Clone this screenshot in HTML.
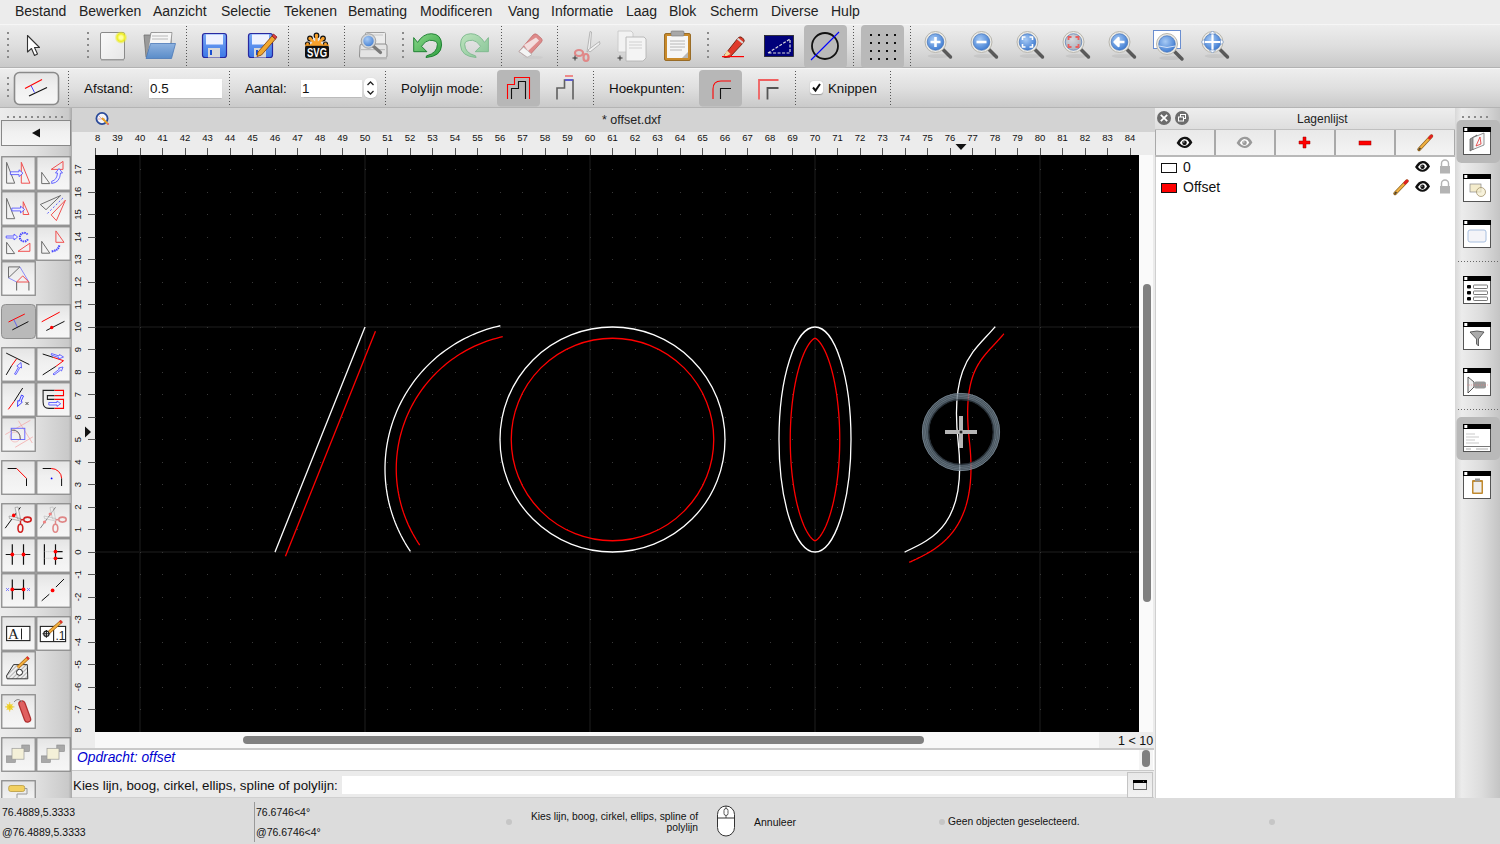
<!DOCTYPE html><html><head><meta charset="utf-8"><style>
*{margin:0;padding:0;box-sizing:border-box}
html,body{width:1500px;height:844px;overflow:hidden;background:#ececec;font-family:"Liberation Sans",sans-serif;color:#000}
.a{position:absolute}
.t{position:absolute;white-space:nowrap;line-height:1}
svg{position:absolute;overflow:visible}
</style></head><body><div class="a" style="left:0;top:0;width:1500px;height:24px;background:#ececec"></div><div class="t" style="left:15px;top:4px;font-size:14px;color:#222">Bestand</div><div class="t" style="left:79px;top:4px;font-size:14px;color:#222">Bewerken</div><div class="t" style="left:153px;top:4px;font-size:14px;color:#222">Aanzicht</div><div class="t" style="left:221px;top:4px;font-size:14px;color:#222">Selectie</div><div class="t" style="left:284px;top:4px;font-size:14px;color:#222">Tekenen</div><div class="t" style="left:348px;top:4px;font-size:14px;color:#222">Bemating</div><div class="t" style="left:420px;top:4px;font-size:14px;color:#222">Modificeren</div><div class="t" style="left:508px;top:4px;font-size:14px;color:#222">Vang</div><div class="t" style="left:551px;top:4px;font-size:14px;color:#222">Informatie</div><div class="t" style="left:626px;top:4px;font-size:14px;color:#222">Laag</div><div class="t" style="left:669px;top:4px;font-size:14px;color:#222">Blok</div><div class="t" style="left:710px;top:4px;font-size:14px;color:#222">Scherm</div><div class="t" style="left:771px;top:4px;font-size:14px;color:#222">Diverse</div><div class="t" style="left:831px;top:4px;font-size:14px;color:#222">Hulp</div><div class="a" style="left:0;top:24px;width:1500px;height:44px;background:linear-gradient(#ededed,#dedede 50%,#c9c9c9);border-top:1px solid #f6f6f6;border-bottom:1px solid #b2b2b2"></div><div class="a" style="left:0;top:68px;width:1500px;height:40px;background:linear-gradient(#eeeeee,#dfdfdf 50%,#cacaca);border-top:1px solid #f6f6f6;border-bottom:1px solid #b4b4b4"></div><div class="a" style="left:0;top:108px;width:72px;height:690px;background:linear-gradient(90deg,#ececec,#e0e0e0 50%,#c9c9c9 95%,#a8a8a8)"></div><div class="a" style="left:72px;top:108px;width:1083px;height:24px;background:#d3d3d3"></div><div class="a" style="left:72px;top:132px;width:1082px;height:616px;background:#ececec"></div><div class="t" style="left:602px;top:114px;font-size:12.5px;color:#222">* offset.dxf</div><div class="a" style="left:95px;top:155px;width:1044px;height:577px;background:#000"></div><div class="a" style="left:1139px;top:155px;width:14px;height:577px;background:#fafafa"></div><div class="a" style="left:1153px;top:132px;width:2px;height:666px;background:#ebebeb"></div><div class="a" style="left:1143px;top:284px;width:8px;height:318px;background:#808080;border-radius:4px"></div><div class="a" style="left:95px;top:732px;width:1004px;height:16px;background:#f8f8f8"></div><div class="a" style="left:243px;top:736px;width:681px;height:8px;background:#808080;border-radius:4px"></div><div class="a" style="left:1099px;top:732px;width:55px;height:16px;background:#ececec"></div><div class="t" style="left:1118px;top:735px;font-size:12.5px;color:#111">1 &lt; 10</div><div class="a" style="left:72px;top:748px;width:1082px;height:23px;background:#fff;border-top:2px solid #c9c9c9;border-bottom:1px solid #c9c9c9"></div><div class="a" style="left:1139px;top:750px;width:14px;height:20px;background:#f5f5f5"></div><div class="a" style="left:1142px;top:750px;width:8px;height:17px;background:#808080;border-radius:4px"></div><div class="t" style="left:77px;top:751px;font-size:13.8px;font-style:italic;color:#0000d0">Opdracht: offset</div><div class="a" style="left:72px;top:771px;width:1082px;height:27px;background:#ebebeb;border-bottom:1px solid #d0d0d0"></div><div class="t" style="left:73px;top:779px;font-size:13.35px;color:#111">Kies lijn, boog, cirkel, ellips, spline of polylijn:</div><div class="a" style="left:342px;top:776px;width:785px;height:18px;background:#fff"></div><div class="a" style="left:1127px;top:772px;width:26px;height:26px;background:linear-gradient(#e8e8e8,#f2f2f2);border:1px solid #c4c4c4"></div><div class="a" style="left:1155px;top:108px;width:300px;height:690px;background:#fff;border-left:1px solid #cfcfcf"></div><div class="a" style="left:1155px;top:108px;width:300px;height:22px;background:linear-gradient(#eeeeee,#dedede);border-bottom:1px solid #c0c0c0"></div><div class="t" style="left:1297px;top:113px;font-size:12px;color:#222">Lagenlijst</div><div class="a" style="left:1455px;top:108px;width:45px;height:690px;background:linear-gradient(90deg,#d8d8d8,#ececec 15%,#dcdcdc 60%,#c4c4c4)"></div><div class="a" style="left:0;top:798px;width:1500px;height:46px;background:#dcdcdc"></div><svg style="left:0;top:0" width="1500" height="844"><defs><clipPath id="rc"><rect x="95" y="132" width="1044" height="23"/></clipPath><clipPath id="lc"><rect x="72" y="155" width="23" height="577"/></clipPath></defs><g clip-path="url(#rc)"><rect x="95" y="148" width="1" height="7" fill="#555"/><text x="95.0" y="141" font-size="9.5" text-anchor="middle" fill="#111" font-family="Liberation Sans">38</text><rect x="117" y="148" width="1" height="7" fill="#555"/><text x="117.5" y="141" font-size="9.5" text-anchor="middle" fill="#111" font-family="Liberation Sans">39</text><rect x="140" y="148" width="1" height="7" fill="#555"/><text x="140.0" y="141" font-size="9.5" text-anchor="middle" fill="#111" font-family="Liberation Sans">40</text><rect x="162" y="148" width="1" height="7" fill="#555"/><text x="162.5" y="141" font-size="9.5" text-anchor="middle" fill="#111" font-family="Liberation Sans">41</text><rect x="185" y="148" width="1" height="7" fill="#555"/><text x="185.0" y="141" font-size="9.5" text-anchor="middle" fill="#111" font-family="Liberation Sans">42</text><rect x="207" y="148" width="1" height="7" fill="#555"/><text x="207.5" y="141" font-size="9.5" text-anchor="middle" fill="#111" font-family="Liberation Sans">43</text><rect x="230" y="148" width="1" height="7" fill="#555"/><text x="230.0" y="141" font-size="9.5" text-anchor="middle" fill="#111" font-family="Liberation Sans">44</text><rect x="252" y="148" width="1" height="7" fill="#555"/><text x="252.5" y="141" font-size="9.5" text-anchor="middle" fill="#111" font-family="Liberation Sans">45</text><rect x="275" y="148" width="1" height="7" fill="#555"/><text x="275.0" y="141" font-size="9.5" text-anchor="middle" fill="#111" font-family="Liberation Sans">46</text><rect x="297" y="148" width="1" height="7" fill="#555"/><text x="297.5" y="141" font-size="9.5" text-anchor="middle" fill="#111" font-family="Liberation Sans">47</text><rect x="320" y="148" width="1" height="7" fill="#555"/><text x="320.0" y="141" font-size="9.5" text-anchor="middle" fill="#111" font-family="Liberation Sans">48</text><rect x="342" y="148" width="1" height="7" fill="#555"/><text x="342.5" y="141" font-size="9.5" text-anchor="middle" fill="#111" font-family="Liberation Sans">49</text><rect x="365" y="148" width="1" height="7" fill="#555"/><text x="365.0" y="141" font-size="9.5" text-anchor="middle" fill="#111" font-family="Liberation Sans">50</text><rect x="387" y="148" width="1" height="7" fill="#555"/><text x="387.5" y="141" font-size="9.5" text-anchor="middle" fill="#111" font-family="Liberation Sans">51</text><rect x="410" y="148" width="1" height="7" fill="#555"/><text x="410.0" y="141" font-size="9.5" text-anchor="middle" fill="#111" font-family="Liberation Sans">52</text><rect x="432" y="148" width="1" height="7" fill="#555"/><text x="432.5" y="141" font-size="9.5" text-anchor="middle" fill="#111" font-family="Liberation Sans">53</text><rect x="455" y="148" width="1" height="7" fill="#555"/><text x="455.0" y="141" font-size="9.5" text-anchor="middle" fill="#111" font-family="Liberation Sans">54</text><rect x="477" y="148" width="1" height="7" fill="#555"/><text x="477.5" y="141" font-size="9.5" text-anchor="middle" fill="#111" font-family="Liberation Sans">55</text><rect x="500" y="148" width="1" height="7" fill="#555"/><text x="500.0" y="141" font-size="9.5" text-anchor="middle" fill="#111" font-family="Liberation Sans">56</text><rect x="522" y="148" width="1" height="7" fill="#555"/><text x="522.5" y="141" font-size="9.5" text-anchor="middle" fill="#111" font-family="Liberation Sans">57</text><rect x="545" y="148" width="1" height="7" fill="#555"/><text x="545.0" y="141" font-size="9.5" text-anchor="middle" fill="#111" font-family="Liberation Sans">58</text><rect x="567" y="148" width="1" height="7" fill="#555"/><text x="567.5" y="141" font-size="9.5" text-anchor="middle" fill="#111" font-family="Liberation Sans">59</text><rect x="590" y="148" width="1" height="7" fill="#555"/><text x="590.0" y="141" font-size="9.5" text-anchor="middle" fill="#111" font-family="Liberation Sans">60</text><rect x="612" y="148" width="1" height="7" fill="#555"/><text x="612.5" y="141" font-size="9.5" text-anchor="middle" fill="#111" font-family="Liberation Sans">61</text><rect x="635" y="148" width="1" height="7" fill="#555"/><text x="635.0" y="141" font-size="9.5" text-anchor="middle" fill="#111" font-family="Liberation Sans">62</text><rect x="657" y="148" width="1" height="7" fill="#555"/><text x="657.5" y="141" font-size="9.5" text-anchor="middle" fill="#111" font-family="Liberation Sans">63</text><rect x="680" y="148" width="1" height="7" fill="#555"/><text x="680.0" y="141" font-size="9.5" text-anchor="middle" fill="#111" font-family="Liberation Sans">64</text><rect x="702" y="148" width="1" height="7" fill="#555"/><text x="702.5" y="141" font-size="9.5" text-anchor="middle" fill="#111" font-family="Liberation Sans">65</text><rect x="725" y="148" width="1" height="7" fill="#555"/><text x="725.0" y="141" font-size="9.5" text-anchor="middle" fill="#111" font-family="Liberation Sans">66</text><rect x="747" y="148" width="1" height="7" fill="#555"/><text x="747.5" y="141" font-size="9.5" text-anchor="middle" fill="#111" font-family="Liberation Sans">67</text><rect x="770" y="148" width="1" height="7" fill="#555"/><text x="770.0" y="141" font-size="9.5" text-anchor="middle" fill="#111" font-family="Liberation Sans">68</text><rect x="792" y="148" width="1" height="7" fill="#555"/><text x="792.5" y="141" font-size="9.5" text-anchor="middle" fill="#111" font-family="Liberation Sans">69</text><rect x="815" y="148" width="1" height="7" fill="#555"/><text x="815.0" y="141" font-size="9.5" text-anchor="middle" fill="#111" font-family="Liberation Sans">70</text><rect x="837" y="148" width="1" height="7" fill="#555"/><text x="837.5" y="141" font-size="9.5" text-anchor="middle" fill="#111" font-family="Liberation Sans">71</text><rect x="860" y="148" width="1" height="7" fill="#555"/><text x="860.0" y="141" font-size="9.5" text-anchor="middle" fill="#111" font-family="Liberation Sans">72</text><rect x="882" y="148" width="1" height="7" fill="#555"/><text x="882.5" y="141" font-size="9.5" text-anchor="middle" fill="#111" font-family="Liberation Sans">73</text><rect x="905" y="148" width="1" height="7" fill="#555"/><text x="905.0" y="141" font-size="9.5" text-anchor="middle" fill="#111" font-family="Liberation Sans">74</text><rect x="927" y="148" width="1" height="7" fill="#555"/><text x="927.5" y="141" font-size="9.5" text-anchor="middle" fill="#111" font-family="Liberation Sans">75</text><rect x="950" y="148" width="1" height="7" fill="#555"/><text x="950.0" y="141" font-size="9.5" text-anchor="middle" fill="#111" font-family="Liberation Sans">76</text><rect x="972" y="148" width="1" height="7" fill="#555"/><text x="972.5" y="141" font-size="9.5" text-anchor="middle" fill="#111" font-family="Liberation Sans">77</text><rect x="995" y="148" width="1" height="7" fill="#555"/><text x="995.0" y="141" font-size="9.5" text-anchor="middle" fill="#111" font-family="Liberation Sans">78</text><rect x="1017" y="148" width="1" height="7" fill="#555"/><text x="1017.5" y="141" font-size="9.5" text-anchor="middle" fill="#111" font-family="Liberation Sans">79</text><rect x="1040" y="148" width="1" height="7" fill="#555"/><text x="1040.0" y="141" font-size="9.5" text-anchor="middle" fill="#111" font-family="Liberation Sans">80</text><rect x="1062" y="148" width="1" height="7" fill="#555"/><text x="1062.5" y="141" font-size="9.5" text-anchor="middle" fill="#111" font-family="Liberation Sans">81</text><rect x="1085" y="148" width="1" height="7" fill="#555"/><text x="1085.0" y="141" font-size="9.5" text-anchor="middle" fill="#111" font-family="Liberation Sans">82</text><rect x="1107" y="148" width="1" height="7" fill="#555"/><text x="1107.5" y="141" font-size="9.5" text-anchor="middle" fill="#111" font-family="Liberation Sans">83</text><rect x="1130" y="148" width="1" height="7" fill="#555"/><text x="1130.0" y="141" font-size="9.5" text-anchor="middle" fill="#111" font-family="Liberation Sans">84</text><rect x="1152" y="148" width="1" height="7" fill="#555"/><text x="1152.5" y="141" font-size="9.5" text-anchor="middle" fill="#111" font-family="Liberation Sans">85</text></g><g clip-path="url(#lc)"><rect x="88" y="754" width="7" height="1" fill="#555"/><text transform="translate(80.8 754.5) rotate(-90)" x="0" y="0" font-size="9.5" text-anchor="middle" fill="#111" font-family="Liberation Sans">-9</text><rect x="88" y="732" width="7" height="1" fill="#555"/><text transform="translate(80.8 732.0) rotate(-90)" x="0" y="0" font-size="9.5" text-anchor="middle" fill="#111" font-family="Liberation Sans">-8</text><rect x="88" y="709" width="7" height="1" fill="#555"/><text transform="translate(80.8 709.5) rotate(-90)" x="0" y="0" font-size="9.5" text-anchor="middle" fill="#111" font-family="Liberation Sans">-7</text><rect x="88" y="687" width="7" height="1" fill="#555"/><text transform="translate(80.8 687.0) rotate(-90)" x="0" y="0" font-size="9.5" text-anchor="middle" fill="#111" font-family="Liberation Sans">-6</text><rect x="88" y="664" width="7" height="1" fill="#555"/><text transform="translate(80.8 664.5) rotate(-90)" x="0" y="0" font-size="9.5" text-anchor="middle" fill="#111" font-family="Liberation Sans">-5</text><rect x="88" y="642" width="7" height="1" fill="#555"/><text transform="translate(80.8 642.0) rotate(-90)" x="0" y="0" font-size="9.5" text-anchor="middle" fill="#111" font-family="Liberation Sans">-4</text><rect x="88" y="619" width="7" height="1" fill="#555"/><text transform="translate(80.8 619.5) rotate(-90)" x="0" y="0" font-size="9.5" text-anchor="middle" fill="#111" font-family="Liberation Sans">-3</text><rect x="88" y="597" width="7" height="1" fill="#555"/><text transform="translate(80.8 597.0) rotate(-90)" x="0" y="0" font-size="9.5" text-anchor="middle" fill="#111" font-family="Liberation Sans">-2</text><rect x="88" y="574" width="7" height="1" fill="#555"/><text transform="translate(80.8 574.5) rotate(-90)" x="0" y="0" font-size="9.5" text-anchor="middle" fill="#111" font-family="Liberation Sans">-1</text><rect x="88" y="552" width="7" height="1" fill="#555"/><text transform="translate(80.8 552.0) rotate(-90)" x="0" y="0" font-size="9.5" text-anchor="middle" fill="#111" font-family="Liberation Sans">0</text><rect x="88" y="529" width="7" height="1" fill="#555"/><text transform="translate(80.8 529.5) rotate(-90)" x="0" y="0" font-size="9.5" text-anchor="middle" fill="#111" font-family="Liberation Sans">1</text><rect x="88" y="507" width="7" height="1" fill="#555"/><text transform="translate(80.8 507.0) rotate(-90)" x="0" y="0" font-size="9.5" text-anchor="middle" fill="#111" font-family="Liberation Sans">2</text><rect x="88" y="484" width="7" height="1" fill="#555"/><text transform="translate(80.8 484.5) rotate(-90)" x="0" y="0" font-size="9.5" text-anchor="middle" fill="#111" font-family="Liberation Sans">3</text><rect x="88" y="462" width="7" height="1" fill="#555"/><text transform="translate(80.8 462.0) rotate(-90)" x="0" y="0" font-size="9.5" text-anchor="middle" fill="#111" font-family="Liberation Sans">4</text><rect x="88" y="439" width="7" height="1" fill="#555"/><text transform="translate(80.8 439.5) rotate(-90)" x="0" y="0" font-size="9.5" text-anchor="middle" fill="#111" font-family="Liberation Sans">5</text><rect x="88" y="417" width="7" height="1" fill="#555"/><text transform="translate(80.8 417.0) rotate(-90)" x="0" y="0" font-size="9.5" text-anchor="middle" fill="#111" font-family="Liberation Sans">6</text><rect x="88" y="394" width="7" height="1" fill="#555"/><text transform="translate(80.8 394.5) rotate(-90)" x="0" y="0" font-size="9.5" text-anchor="middle" fill="#111" font-family="Liberation Sans">7</text><rect x="88" y="372" width="7" height="1" fill="#555"/><text transform="translate(80.8 372.0) rotate(-90)" x="0" y="0" font-size="9.5" text-anchor="middle" fill="#111" font-family="Liberation Sans">8</text><rect x="88" y="349" width="7" height="1" fill="#555"/><text transform="translate(80.8 349.5) rotate(-90)" x="0" y="0" font-size="9.5" text-anchor="middle" fill="#111" font-family="Liberation Sans">9</text><rect x="88" y="327" width="7" height="1" fill="#555"/><text transform="translate(80.8 327.0) rotate(-90)" x="0" y="0" font-size="9.5" text-anchor="middle" fill="#111" font-family="Liberation Sans">10</text><rect x="88" y="304" width="7" height="1" fill="#555"/><text transform="translate(80.8 304.5) rotate(-90)" x="0" y="0" font-size="9.5" text-anchor="middle" fill="#111" font-family="Liberation Sans">11</text><rect x="88" y="282" width="7" height="1" fill="#555"/><text transform="translate(80.8 282.0) rotate(-90)" x="0" y="0" font-size="9.5" text-anchor="middle" fill="#111" font-family="Liberation Sans">12</text><rect x="88" y="259" width="7" height="1" fill="#555"/><text transform="translate(80.8 259.5) rotate(-90)" x="0" y="0" font-size="9.5" text-anchor="middle" fill="#111" font-family="Liberation Sans">13</text><rect x="88" y="237" width="7" height="1" fill="#555"/><text transform="translate(80.8 237.0) rotate(-90)" x="0" y="0" font-size="9.5" text-anchor="middle" fill="#111" font-family="Liberation Sans">14</text><rect x="88" y="214" width="7" height="1" fill="#555"/><text transform="translate(80.8 214.5) rotate(-90)" x="0" y="0" font-size="9.5" text-anchor="middle" fill="#111" font-family="Liberation Sans">15</text><rect x="88" y="192" width="7" height="1" fill="#555"/><text transform="translate(80.8 192.0) rotate(-90)" x="0" y="0" font-size="9.5" text-anchor="middle" fill="#111" font-family="Liberation Sans">16</text><rect x="88" y="169" width="7" height="1" fill="#555"/><text transform="translate(80.8 169.5) rotate(-90)" x="0" y="0" font-size="9.5" text-anchor="middle" fill="#111" font-family="Liberation Sans">17</text><rect x="88" y="147" width="7" height="1" fill="#555"/><text transform="translate(80.8 147.0) rotate(-90)" x="0" y="0" font-size="9.5" text-anchor="middle" fill="#111" font-family="Liberation Sans">18</text></g><path d="M955.5 144 L966.5 144 L961 150 Z" fill="#111"/><path d="M85 426.5 L85 437.5 L91 432 Z" fill="#111"/></svg><svg style="left:95px;top:155px" width="1044" height="577" viewBox="95 155 1044 577"><defs><clipPath id="cc"><rect x="95" y="155" width="1044" height="577"/></clipPath></defs><g clip-path="url(#cc)"><rect x="139" y="155" width="2" height="577" fill="#0f0f0f"/><rect x="364" y="155" width="2" height="577" fill="#0f0f0f"/><rect x="589" y="155" width="2" height="577" fill="#0f0f0f"/><rect x="814" y="155" width="2" height="577" fill="#0f0f0f"/><rect x="1039" y="155" width="2" height="577" fill="#0f0f0f"/><rect x="95" y="551" width="1044" height="2" fill="#0f0f0f"/><rect x="95" y="326" width="1044" height="2" fill="#0f0f0f"/><path fill="#383838" d="M95 732h1v1h-1zM95 709h1v1h-1zM95 687h1v1h-1zM95 664h1v1h-1zM95 642h1v1h-1zM95 619h1v1h-1zM95 597h1v1h-1zM95 574h1v1h-1zM95 552h1v1h-1zM95 529h1v1h-1zM95 507h1v1h-1zM95 484h1v1h-1zM95 462h1v1h-1zM95 439h1v1h-1zM95 417h1v1h-1zM95 394h1v1h-1zM95 372h1v1h-1zM95 349h1v1h-1zM95 327h1v1h-1zM95 304h1v1h-1zM95 282h1v1h-1zM95 259h1v1h-1zM95 237h1v1h-1zM95 214h1v1h-1zM95 192h1v1h-1zM95 169h1v1h-1zM117 732h1v1h-1zM117 709h1v1h-1zM117 687h1v1h-1zM117 664h1v1h-1zM117 642h1v1h-1zM117 619h1v1h-1zM117 597h1v1h-1zM117 574h1v1h-1zM117 552h1v1h-1zM117 529h1v1h-1zM117 507h1v1h-1zM117 484h1v1h-1zM117 462h1v1h-1zM117 439h1v1h-1zM117 417h1v1h-1zM117 394h1v1h-1zM117 372h1v1h-1zM117 349h1v1h-1zM117 327h1v1h-1zM117 304h1v1h-1zM117 282h1v1h-1zM117 259h1v1h-1zM117 237h1v1h-1zM117 214h1v1h-1zM117 192h1v1h-1zM117 169h1v1h-1zM140 732h1v1h-1zM140 709h1v1h-1zM140 687h1v1h-1zM140 664h1v1h-1zM140 642h1v1h-1zM140 619h1v1h-1zM140 597h1v1h-1zM140 574h1v1h-1zM140 552h1v1h-1zM140 529h1v1h-1zM140 507h1v1h-1zM140 484h1v1h-1zM140 462h1v1h-1zM140 439h1v1h-1zM140 417h1v1h-1zM140 394h1v1h-1zM140 372h1v1h-1zM140 349h1v1h-1zM140 327h1v1h-1zM140 304h1v1h-1zM140 282h1v1h-1zM140 259h1v1h-1zM140 237h1v1h-1zM140 214h1v1h-1zM140 192h1v1h-1zM140 169h1v1h-1zM162 732h1v1h-1zM162 709h1v1h-1zM162 687h1v1h-1zM162 664h1v1h-1zM162 642h1v1h-1zM162 619h1v1h-1zM162 597h1v1h-1zM162 574h1v1h-1zM162 552h1v1h-1zM162 529h1v1h-1zM162 507h1v1h-1zM162 484h1v1h-1zM162 462h1v1h-1zM162 439h1v1h-1zM162 417h1v1h-1zM162 394h1v1h-1zM162 372h1v1h-1zM162 349h1v1h-1zM162 327h1v1h-1zM162 304h1v1h-1zM162 282h1v1h-1zM162 259h1v1h-1zM162 237h1v1h-1zM162 214h1v1h-1zM162 192h1v1h-1zM162 169h1v1h-1zM185 732h1v1h-1zM185 709h1v1h-1zM185 687h1v1h-1zM185 664h1v1h-1zM185 642h1v1h-1zM185 619h1v1h-1zM185 597h1v1h-1zM185 574h1v1h-1zM185 552h1v1h-1zM185 529h1v1h-1zM185 507h1v1h-1zM185 484h1v1h-1zM185 462h1v1h-1zM185 439h1v1h-1zM185 417h1v1h-1zM185 394h1v1h-1zM185 372h1v1h-1zM185 349h1v1h-1zM185 327h1v1h-1zM185 304h1v1h-1zM185 282h1v1h-1zM185 259h1v1h-1zM185 237h1v1h-1zM185 214h1v1h-1zM185 192h1v1h-1zM185 169h1v1h-1zM207 732h1v1h-1zM207 709h1v1h-1zM207 687h1v1h-1zM207 664h1v1h-1zM207 642h1v1h-1zM207 619h1v1h-1zM207 597h1v1h-1zM207 574h1v1h-1zM207 552h1v1h-1zM207 529h1v1h-1zM207 507h1v1h-1zM207 484h1v1h-1zM207 462h1v1h-1zM207 439h1v1h-1zM207 417h1v1h-1zM207 394h1v1h-1zM207 372h1v1h-1zM207 349h1v1h-1zM207 327h1v1h-1zM207 304h1v1h-1zM207 282h1v1h-1zM207 259h1v1h-1zM207 237h1v1h-1zM207 214h1v1h-1zM207 192h1v1h-1zM207 169h1v1h-1zM230 732h1v1h-1zM230 709h1v1h-1zM230 687h1v1h-1zM230 664h1v1h-1zM230 642h1v1h-1zM230 619h1v1h-1zM230 597h1v1h-1zM230 574h1v1h-1zM230 552h1v1h-1zM230 529h1v1h-1zM230 507h1v1h-1zM230 484h1v1h-1zM230 462h1v1h-1zM230 439h1v1h-1zM230 417h1v1h-1zM230 394h1v1h-1zM230 372h1v1h-1zM230 349h1v1h-1zM230 327h1v1h-1zM230 304h1v1h-1zM230 282h1v1h-1zM230 259h1v1h-1zM230 237h1v1h-1zM230 214h1v1h-1zM230 192h1v1h-1zM230 169h1v1h-1zM252 732h1v1h-1zM252 709h1v1h-1zM252 687h1v1h-1zM252 664h1v1h-1zM252 642h1v1h-1zM252 619h1v1h-1zM252 597h1v1h-1zM252 574h1v1h-1zM252 552h1v1h-1zM252 529h1v1h-1zM252 507h1v1h-1zM252 484h1v1h-1zM252 462h1v1h-1zM252 439h1v1h-1zM252 417h1v1h-1zM252 394h1v1h-1zM252 372h1v1h-1zM252 349h1v1h-1zM252 327h1v1h-1zM252 304h1v1h-1zM252 282h1v1h-1zM252 259h1v1h-1zM252 237h1v1h-1zM252 214h1v1h-1zM252 192h1v1h-1zM252 169h1v1h-1zM275 732h1v1h-1zM275 709h1v1h-1zM275 687h1v1h-1zM275 664h1v1h-1zM275 642h1v1h-1zM275 619h1v1h-1zM275 597h1v1h-1zM275 574h1v1h-1zM275 552h1v1h-1zM275 529h1v1h-1zM275 507h1v1h-1zM275 484h1v1h-1zM275 462h1v1h-1zM275 439h1v1h-1zM275 417h1v1h-1zM275 394h1v1h-1zM275 372h1v1h-1zM275 349h1v1h-1zM275 327h1v1h-1zM275 304h1v1h-1zM275 282h1v1h-1zM275 259h1v1h-1zM275 237h1v1h-1zM275 214h1v1h-1zM275 192h1v1h-1zM275 169h1v1h-1zM297 732h1v1h-1zM297 709h1v1h-1zM297 687h1v1h-1zM297 664h1v1h-1zM297 642h1v1h-1zM297 619h1v1h-1zM297 597h1v1h-1zM297 574h1v1h-1zM297 552h1v1h-1zM297 529h1v1h-1zM297 507h1v1h-1zM297 484h1v1h-1zM297 462h1v1h-1zM297 439h1v1h-1zM297 417h1v1h-1zM297 394h1v1h-1zM297 372h1v1h-1zM297 349h1v1h-1zM297 327h1v1h-1zM297 304h1v1h-1zM297 282h1v1h-1zM297 259h1v1h-1zM297 237h1v1h-1zM297 214h1v1h-1zM297 192h1v1h-1zM297 169h1v1h-1zM320 732h1v1h-1zM320 709h1v1h-1zM320 687h1v1h-1zM320 664h1v1h-1zM320 642h1v1h-1zM320 619h1v1h-1zM320 597h1v1h-1zM320 574h1v1h-1zM320 552h1v1h-1zM320 529h1v1h-1zM320 507h1v1h-1zM320 484h1v1h-1zM320 462h1v1h-1zM320 439h1v1h-1zM320 417h1v1h-1zM320 394h1v1h-1zM320 372h1v1h-1zM320 349h1v1h-1zM320 327h1v1h-1zM320 304h1v1h-1zM320 282h1v1h-1zM320 259h1v1h-1zM320 237h1v1h-1zM320 214h1v1h-1zM320 192h1v1h-1zM320 169h1v1h-1zM342 732h1v1h-1zM342 709h1v1h-1zM342 687h1v1h-1zM342 664h1v1h-1zM342 642h1v1h-1zM342 619h1v1h-1zM342 597h1v1h-1zM342 574h1v1h-1zM342 552h1v1h-1zM342 529h1v1h-1zM342 507h1v1h-1zM342 484h1v1h-1zM342 462h1v1h-1zM342 439h1v1h-1zM342 417h1v1h-1zM342 394h1v1h-1zM342 372h1v1h-1zM342 349h1v1h-1zM342 327h1v1h-1zM342 304h1v1h-1zM342 282h1v1h-1zM342 259h1v1h-1zM342 237h1v1h-1zM342 214h1v1h-1zM342 192h1v1h-1zM342 169h1v1h-1zM365 732h1v1h-1zM365 709h1v1h-1zM365 687h1v1h-1zM365 664h1v1h-1zM365 642h1v1h-1zM365 619h1v1h-1zM365 597h1v1h-1zM365 574h1v1h-1zM365 552h1v1h-1zM365 529h1v1h-1zM365 507h1v1h-1zM365 484h1v1h-1zM365 462h1v1h-1zM365 439h1v1h-1zM365 417h1v1h-1zM365 394h1v1h-1zM365 372h1v1h-1zM365 349h1v1h-1zM365 327h1v1h-1zM365 304h1v1h-1zM365 282h1v1h-1zM365 259h1v1h-1zM365 237h1v1h-1zM365 214h1v1h-1zM365 192h1v1h-1zM365 169h1v1h-1zM387 732h1v1h-1zM387 709h1v1h-1zM387 687h1v1h-1zM387 664h1v1h-1zM387 642h1v1h-1zM387 619h1v1h-1zM387 597h1v1h-1zM387 574h1v1h-1zM387 552h1v1h-1zM387 529h1v1h-1zM387 507h1v1h-1zM387 484h1v1h-1zM387 462h1v1h-1zM387 439h1v1h-1zM387 417h1v1h-1zM387 394h1v1h-1zM387 372h1v1h-1zM387 349h1v1h-1zM387 327h1v1h-1zM387 304h1v1h-1zM387 282h1v1h-1zM387 259h1v1h-1zM387 237h1v1h-1zM387 214h1v1h-1zM387 192h1v1h-1zM387 169h1v1h-1zM410 732h1v1h-1zM410 709h1v1h-1zM410 687h1v1h-1zM410 664h1v1h-1zM410 642h1v1h-1zM410 619h1v1h-1zM410 597h1v1h-1zM410 574h1v1h-1zM410 552h1v1h-1zM410 529h1v1h-1zM410 507h1v1h-1zM410 484h1v1h-1zM410 462h1v1h-1zM410 439h1v1h-1zM410 417h1v1h-1zM410 394h1v1h-1zM410 372h1v1h-1zM410 349h1v1h-1zM410 327h1v1h-1zM410 304h1v1h-1zM410 282h1v1h-1zM410 259h1v1h-1zM410 237h1v1h-1zM410 214h1v1h-1zM410 192h1v1h-1zM410 169h1v1h-1zM432 732h1v1h-1zM432 709h1v1h-1zM432 687h1v1h-1zM432 664h1v1h-1zM432 642h1v1h-1zM432 619h1v1h-1zM432 597h1v1h-1zM432 574h1v1h-1zM432 552h1v1h-1zM432 529h1v1h-1zM432 507h1v1h-1zM432 484h1v1h-1zM432 462h1v1h-1zM432 439h1v1h-1zM432 417h1v1h-1zM432 394h1v1h-1zM432 372h1v1h-1zM432 349h1v1h-1zM432 327h1v1h-1zM432 304h1v1h-1zM432 282h1v1h-1zM432 259h1v1h-1zM432 237h1v1h-1zM432 214h1v1h-1zM432 192h1v1h-1zM432 169h1v1h-1zM455 732h1v1h-1zM455 709h1v1h-1zM455 687h1v1h-1zM455 664h1v1h-1zM455 642h1v1h-1zM455 619h1v1h-1zM455 597h1v1h-1zM455 574h1v1h-1zM455 552h1v1h-1zM455 529h1v1h-1zM455 507h1v1h-1zM455 484h1v1h-1zM455 462h1v1h-1zM455 439h1v1h-1zM455 417h1v1h-1zM455 394h1v1h-1zM455 372h1v1h-1zM455 349h1v1h-1zM455 327h1v1h-1zM455 304h1v1h-1zM455 282h1v1h-1zM455 259h1v1h-1zM455 237h1v1h-1zM455 214h1v1h-1zM455 192h1v1h-1zM455 169h1v1h-1zM477 732h1v1h-1zM477 709h1v1h-1zM477 687h1v1h-1zM477 664h1v1h-1zM477 642h1v1h-1zM477 619h1v1h-1zM477 597h1v1h-1zM477 574h1v1h-1zM477 552h1v1h-1zM477 529h1v1h-1zM477 507h1v1h-1zM477 484h1v1h-1zM477 462h1v1h-1zM477 439h1v1h-1zM477 417h1v1h-1zM477 394h1v1h-1zM477 372h1v1h-1zM477 349h1v1h-1zM477 327h1v1h-1zM477 304h1v1h-1zM477 282h1v1h-1zM477 259h1v1h-1zM477 237h1v1h-1zM477 214h1v1h-1zM477 192h1v1h-1zM477 169h1v1h-1zM500 732h1v1h-1zM500 709h1v1h-1zM500 687h1v1h-1zM500 664h1v1h-1zM500 642h1v1h-1zM500 619h1v1h-1zM500 597h1v1h-1zM500 574h1v1h-1zM500 552h1v1h-1zM500 529h1v1h-1zM500 507h1v1h-1zM500 484h1v1h-1zM500 462h1v1h-1zM500 439h1v1h-1zM500 417h1v1h-1zM500 394h1v1h-1zM500 372h1v1h-1zM500 349h1v1h-1zM500 327h1v1h-1zM500 304h1v1h-1zM500 282h1v1h-1zM500 259h1v1h-1zM500 237h1v1h-1zM500 214h1v1h-1zM500 192h1v1h-1zM500 169h1v1h-1zM522 732h1v1h-1zM522 709h1v1h-1zM522 687h1v1h-1zM522 664h1v1h-1zM522 642h1v1h-1zM522 619h1v1h-1zM522 597h1v1h-1zM522 574h1v1h-1zM522 552h1v1h-1zM522 529h1v1h-1zM522 507h1v1h-1zM522 484h1v1h-1zM522 462h1v1h-1zM522 439h1v1h-1zM522 417h1v1h-1zM522 394h1v1h-1zM522 372h1v1h-1zM522 349h1v1h-1zM522 327h1v1h-1zM522 304h1v1h-1zM522 282h1v1h-1zM522 259h1v1h-1zM522 237h1v1h-1zM522 214h1v1h-1zM522 192h1v1h-1zM522 169h1v1h-1zM545 732h1v1h-1zM545 709h1v1h-1zM545 687h1v1h-1zM545 664h1v1h-1zM545 642h1v1h-1zM545 619h1v1h-1zM545 597h1v1h-1zM545 574h1v1h-1zM545 552h1v1h-1zM545 529h1v1h-1zM545 507h1v1h-1zM545 484h1v1h-1zM545 462h1v1h-1zM545 439h1v1h-1zM545 417h1v1h-1zM545 394h1v1h-1zM545 372h1v1h-1zM545 349h1v1h-1zM545 327h1v1h-1zM545 304h1v1h-1zM545 282h1v1h-1zM545 259h1v1h-1zM545 237h1v1h-1zM545 214h1v1h-1zM545 192h1v1h-1zM545 169h1v1h-1zM567 732h1v1h-1zM567 709h1v1h-1zM567 687h1v1h-1zM567 664h1v1h-1zM567 642h1v1h-1zM567 619h1v1h-1zM567 597h1v1h-1zM567 574h1v1h-1zM567 552h1v1h-1zM567 529h1v1h-1zM567 507h1v1h-1zM567 484h1v1h-1zM567 462h1v1h-1zM567 439h1v1h-1zM567 417h1v1h-1zM567 394h1v1h-1zM567 372h1v1h-1zM567 349h1v1h-1zM567 327h1v1h-1zM567 304h1v1h-1zM567 282h1v1h-1zM567 259h1v1h-1zM567 237h1v1h-1zM567 214h1v1h-1zM567 192h1v1h-1zM567 169h1v1h-1zM590 732h1v1h-1zM590 709h1v1h-1zM590 687h1v1h-1zM590 664h1v1h-1zM590 642h1v1h-1zM590 619h1v1h-1zM590 597h1v1h-1zM590 574h1v1h-1zM590 552h1v1h-1zM590 529h1v1h-1zM590 507h1v1h-1zM590 484h1v1h-1zM590 462h1v1h-1zM590 439h1v1h-1zM590 417h1v1h-1zM590 394h1v1h-1zM590 372h1v1h-1zM590 349h1v1h-1zM590 327h1v1h-1zM590 304h1v1h-1zM590 282h1v1h-1zM590 259h1v1h-1zM590 237h1v1h-1zM590 214h1v1h-1zM590 192h1v1h-1zM590 169h1v1h-1zM612 732h1v1h-1zM612 709h1v1h-1zM612 687h1v1h-1zM612 664h1v1h-1zM612 642h1v1h-1zM612 619h1v1h-1zM612 597h1v1h-1zM612 574h1v1h-1zM612 552h1v1h-1zM612 529h1v1h-1zM612 507h1v1h-1zM612 484h1v1h-1zM612 462h1v1h-1zM612 439h1v1h-1zM612 417h1v1h-1zM612 394h1v1h-1zM612 372h1v1h-1zM612 349h1v1h-1zM612 327h1v1h-1zM612 304h1v1h-1zM612 282h1v1h-1zM612 259h1v1h-1zM612 237h1v1h-1zM612 214h1v1h-1zM612 192h1v1h-1zM612 169h1v1h-1zM635 732h1v1h-1zM635 709h1v1h-1zM635 687h1v1h-1zM635 664h1v1h-1zM635 642h1v1h-1zM635 619h1v1h-1zM635 597h1v1h-1zM635 574h1v1h-1zM635 552h1v1h-1zM635 529h1v1h-1zM635 507h1v1h-1zM635 484h1v1h-1zM635 462h1v1h-1zM635 439h1v1h-1zM635 417h1v1h-1zM635 394h1v1h-1zM635 372h1v1h-1zM635 349h1v1h-1zM635 327h1v1h-1zM635 304h1v1h-1zM635 282h1v1h-1zM635 259h1v1h-1zM635 237h1v1h-1zM635 214h1v1h-1zM635 192h1v1h-1zM635 169h1v1h-1zM657 732h1v1h-1zM657 709h1v1h-1zM657 687h1v1h-1zM657 664h1v1h-1zM657 642h1v1h-1zM657 619h1v1h-1zM657 597h1v1h-1zM657 574h1v1h-1zM657 552h1v1h-1zM657 529h1v1h-1zM657 507h1v1h-1zM657 484h1v1h-1zM657 462h1v1h-1zM657 439h1v1h-1zM657 417h1v1h-1zM657 394h1v1h-1zM657 372h1v1h-1zM657 349h1v1h-1zM657 327h1v1h-1zM657 304h1v1h-1zM657 282h1v1h-1zM657 259h1v1h-1zM657 237h1v1h-1zM657 214h1v1h-1zM657 192h1v1h-1zM657 169h1v1h-1zM680 732h1v1h-1zM680 709h1v1h-1zM680 687h1v1h-1zM680 664h1v1h-1zM680 642h1v1h-1zM680 619h1v1h-1zM680 597h1v1h-1zM680 574h1v1h-1zM680 552h1v1h-1zM680 529h1v1h-1zM680 507h1v1h-1zM680 484h1v1h-1zM680 462h1v1h-1zM680 439h1v1h-1zM680 417h1v1h-1zM680 394h1v1h-1zM680 372h1v1h-1zM680 349h1v1h-1zM680 327h1v1h-1zM680 304h1v1h-1zM680 282h1v1h-1zM680 259h1v1h-1zM680 237h1v1h-1zM680 214h1v1h-1zM680 192h1v1h-1zM680 169h1v1h-1zM702 732h1v1h-1zM702 709h1v1h-1zM702 687h1v1h-1zM702 664h1v1h-1zM702 642h1v1h-1zM702 619h1v1h-1zM702 597h1v1h-1zM702 574h1v1h-1zM702 552h1v1h-1zM702 529h1v1h-1zM702 507h1v1h-1zM702 484h1v1h-1zM702 462h1v1h-1zM702 439h1v1h-1zM702 417h1v1h-1zM702 394h1v1h-1zM702 372h1v1h-1zM702 349h1v1h-1zM702 327h1v1h-1zM702 304h1v1h-1zM702 282h1v1h-1zM702 259h1v1h-1zM702 237h1v1h-1zM702 214h1v1h-1zM702 192h1v1h-1zM702 169h1v1h-1zM725 732h1v1h-1zM725 709h1v1h-1zM725 687h1v1h-1zM725 664h1v1h-1zM725 642h1v1h-1zM725 619h1v1h-1zM725 597h1v1h-1zM725 574h1v1h-1zM725 552h1v1h-1zM725 529h1v1h-1zM725 507h1v1h-1zM725 484h1v1h-1zM725 462h1v1h-1zM725 439h1v1h-1zM725 417h1v1h-1zM725 394h1v1h-1zM725 372h1v1h-1zM725 349h1v1h-1zM725 327h1v1h-1zM725 304h1v1h-1zM725 282h1v1h-1zM725 259h1v1h-1zM725 237h1v1h-1zM725 214h1v1h-1zM725 192h1v1h-1zM725 169h1v1h-1zM747 732h1v1h-1zM747 709h1v1h-1zM747 687h1v1h-1zM747 664h1v1h-1zM747 642h1v1h-1zM747 619h1v1h-1zM747 597h1v1h-1zM747 574h1v1h-1zM747 552h1v1h-1zM747 529h1v1h-1zM747 507h1v1h-1zM747 484h1v1h-1zM747 462h1v1h-1zM747 439h1v1h-1zM747 417h1v1h-1zM747 394h1v1h-1zM747 372h1v1h-1zM747 349h1v1h-1zM747 327h1v1h-1zM747 304h1v1h-1zM747 282h1v1h-1zM747 259h1v1h-1zM747 237h1v1h-1zM747 214h1v1h-1zM747 192h1v1h-1zM747 169h1v1h-1zM770 732h1v1h-1zM770 709h1v1h-1zM770 687h1v1h-1zM770 664h1v1h-1zM770 642h1v1h-1zM770 619h1v1h-1zM770 597h1v1h-1zM770 574h1v1h-1zM770 552h1v1h-1zM770 529h1v1h-1zM770 507h1v1h-1zM770 484h1v1h-1zM770 462h1v1h-1zM770 439h1v1h-1zM770 417h1v1h-1zM770 394h1v1h-1zM770 372h1v1h-1zM770 349h1v1h-1zM770 327h1v1h-1zM770 304h1v1h-1zM770 282h1v1h-1zM770 259h1v1h-1zM770 237h1v1h-1zM770 214h1v1h-1zM770 192h1v1h-1zM770 169h1v1h-1zM792 732h1v1h-1zM792 709h1v1h-1zM792 687h1v1h-1zM792 664h1v1h-1zM792 642h1v1h-1zM792 619h1v1h-1zM792 597h1v1h-1zM792 574h1v1h-1zM792 552h1v1h-1zM792 529h1v1h-1zM792 507h1v1h-1zM792 484h1v1h-1zM792 462h1v1h-1zM792 439h1v1h-1zM792 417h1v1h-1zM792 394h1v1h-1zM792 372h1v1h-1zM792 349h1v1h-1zM792 327h1v1h-1zM792 304h1v1h-1zM792 282h1v1h-1zM792 259h1v1h-1zM792 237h1v1h-1zM792 214h1v1h-1zM792 192h1v1h-1zM792 169h1v1h-1zM815 732h1v1h-1zM815 709h1v1h-1zM815 687h1v1h-1zM815 664h1v1h-1zM815 642h1v1h-1zM815 619h1v1h-1zM815 597h1v1h-1zM815 574h1v1h-1zM815 552h1v1h-1zM815 529h1v1h-1zM815 507h1v1h-1zM815 484h1v1h-1zM815 462h1v1h-1zM815 439h1v1h-1zM815 417h1v1h-1zM815 394h1v1h-1zM815 372h1v1h-1zM815 349h1v1h-1zM815 327h1v1h-1zM815 304h1v1h-1zM815 282h1v1h-1zM815 259h1v1h-1zM815 237h1v1h-1zM815 214h1v1h-1zM815 192h1v1h-1zM815 169h1v1h-1zM837 732h1v1h-1zM837 709h1v1h-1zM837 687h1v1h-1zM837 664h1v1h-1zM837 642h1v1h-1zM837 619h1v1h-1zM837 597h1v1h-1zM837 574h1v1h-1zM837 552h1v1h-1zM837 529h1v1h-1zM837 507h1v1h-1zM837 484h1v1h-1zM837 462h1v1h-1zM837 439h1v1h-1zM837 417h1v1h-1zM837 394h1v1h-1zM837 372h1v1h-1zM837 349h1v1h-1zM837 327h1v1h-1zM837 304h1v1h-1zM837 282h1v1h-1zM837 259h1v1h-1zM837 237h1v1h-1zM837 214h1v1h-1zM837 192h1v1h-1zM837 169h1v1h-1zM860 732h1v1h-1zM860 709h1v1h-1zM860 687h1v1h-1zM860 664h1v1h-1zM860 642h1v1h-1zM860 619h1v1h-1zM860 597h1v1h-1zM860 574h1v1h-1zM860 552h1v1h-1zM860 529h1v1h-1zM860 507h1v1h-1zM860 484h1v1h-1zM860 462h1v1h-1zM860 439h1v1h-1zM860 417h1v1h-1zM860 394h1v1h-1zM860 372h1v1h-1zM860 349h1v1h-1zM860 327h1v1h-1zM860 304h1v1h-1zM860 282h1v1h-1zM860 259h1v1h-1zM860 237h1v1h-1zM860 214h1v1h-1zM860 192h1v1h-1zM860 169h1v1h-1zM882 732h1v1h-1zM882 709h1v1h-1zM882 687h1v1h-1zM882 664h1v1h-1zM882 642h1v1h-1zM882 619h1v1h-1zM882 597h1v1h-1zM882 574h1v1h-1zM882 552h1v1h-1zM882 529h1v1h-1zM882 507h1v1h-1zM882 484h1v1h-1zM882 462h1v1h-1zM882 439h1v1h-1zM882 417h1v1h-1zM882 394h1v1h-1zM882 372h1v1h-1zM882 349h1v1h-1zM882 327h1v1h-1zM882 304h1v1h-1zM882 282h1v1h-1zM882 259h1v1h-1zM882 237h1v1h-1zM882 214h1v1h-1zM882 192h1v1h-1zM882 169h1v1h-1zM905 732h1v1h-1zM905 709h1v1h-1zM905 687h1v1h-1zM905 664h1v1h-1zM905 642h1v1h-1zM905 619h1v1h-1zM905 597h1v1h-1zM905 574h1v1h-1zM905 552h1v1h-1zM905 529h1v1h-1zM905 507h1v1h-1zM905 484h1v1h-1zM905 462h1v1h-1zM905 439h1v1h-1zM905 417h1v1h-1zM905 394h1v1h-1zM905 372h1v1h-1zM905 349h1v1h-1zM905 327h1v1h-1zM905 304h1v1h-1zM905 282h1v1h-1zM905 259h1v1h-1zM905 237h1v1h-1zM905 214h1v1h-1zM905 192h1v1h-1zM905 169h1v1h-1zM927 732h1v1h-1zM927 709h1v1h-1zM927 687h1v1h-1zM927 664h1v1h-1zM927 642h1v1h-1zM927 619h1v1h-1zM927 597h1v1h-1zM927 574h1v1h-1zM927 552h1v1h-1zM927 529h1v1h-1zM927 507h1v1h-1zM927 484h1v1h-1zM927 462h1v1h-1zM927 439h1v1h-1zM927 417h1v1h-1zM927 394h1v1h-1zM927 372h1v1h-1zM927 349h1v1h-1zM927 327h1v1h-1zM927 304h1v1h-1zM927 282h1v1h-1zM927 259h1v1h-1zM927 237h1v1h-1zM927 214h1v1h-1zM927 192h1v1h-1zM927 169h1v1h-1zM950 732h1v1h-1zM950 709h1v1h-1zM950 687h1v1h-1zM950 664h1v1h-1zM950 642h1v1h-1zM950 619h1v1h-1zM950 597h1v1h-1zM950 574h1v1h-1zM950 552h1v1h-1zM950 529h1v1h-1zM950 507h1v1h-1zM950 484h1v1h-1zM950 462h1v1h-1zM950 439h1v1h-1zM950 417h1v1h-1zM950 394h1v1h-1zM950 372h1v1h-1zM950 349h1v1h-1zM950 327h1v1h-1zM950 304h1v1h-1zM950 282h1v1h-1zM950 259h1v1h-1zM950 237h1v1h-1zM950 214h1v1h-1zM950 192h1v1h-1zM950 169h1v1h-1zM972 732h1v1h-1zM972 709h1v1h-1zM972 687h1v1h-1zM972 664h1v1h-1zM972 642h1v1h-1zM972 619h1v1h-1zM972 597h1v1h-1zM972 574h1v1h-1zM972 552h1v1h-1zM972 529h1v1h-1zM972 507h1v1h-1zM972 484h1v1h-1zM972 462h1v1h-1zM972 439h1v1h-1zM972 417h1v1h-1zM972 394h1v1h-1zM972 372h1v1h-1zM972 349h1v1h-1zM972 327h1v1h-1zM972 304h1v1h-1zM972 282h1v1h-1zM972 259h1v1h-1zM972 237h1v1h-1zM972 214h1v1h-1zM972 192h1v1h-1zM972 169h1v1h-1zM995 732h1v1h-1zM995 709h1v1h-1zM995 687h1v1h-1zM995 664h1v1h-1zM995 642h1v1h-1zM995 619h1v1h-1zM995 597h1v1h-1zM995 574h1v1h-1zM995 552h1v1h-1zM995 529h1v1h-1zM995 507h1v1h-1zM995 484h1v1h-1zM995 462h1v1h-1zM995 439h1v1h-1zM995 417h1v1h-1zM995 394h1v1h-1zM995 372h1v1h-1zM995 349h1v1h-1zM995 327h1v1h-1zM995 304h1v1h-1zM995 282h1v1h-1zM995 259h1v1h-1zM995 237h1v1h-1zM995 214h1v1h-1zM995 192h1v1h-1zM995 169h1v1h-1zM1017 732h1v1h-1zM1017 709h1v1h-1zM1017 687h1v1h-1zM1017 664h1v1h-1zM1017 642h1v1h-1zM1017 619h1v1h-1zM1017 597h1v1h-1zM1017 574h1v1h-1zM1017 552h1v1h-1zM1017 529h1v1h-1zM1017 507h1v1h-1zM1017 484h1v1h-1zM1017 462h1v1h-1zM1017 439h1v1h-1zM1017 417h1v1h-1zM1017 394h1v1h-1zM1017 372h1v1h-1zM1017 349h1v1h-1zM1017 327h1v1h-1zM1017 304h1v1h-1zM1017 282h1v1h-1zM1017 259h1v1h-1zM1017 237h1v1h-1zM1017 214h1v1h-1zM1017 192h1v1h-1zM1017 169h1v1h-1zM1040 732h1v1h-1zM1040 709h1v1h-1zM1040 687h1v1h-1zM1040 664h1v1h-1zM1040 642h1v1h-1zM1040 619h1v1h-1zM1040 597h1v1h-1zM1040 574h1v1h-1zM1040 552h1v1h-1zM1040 529h1v1h-1zM1040 507h1v1h-1zM1040 484h1v1h-1zM1040 462h1v1h-1zM1040 439h1v1h-1zM1040 417h1v1h-1zM1040 394h1v1h-1zM1040 372h1v1h-1zM1040 349h1v1h-1zM1040 327h1v1h-1zM1040 304h1v1h-1zM1040 282h1v1h-1zM1040 259h1v1h-1zM1040 237h1v1h-1zM1040 214h1v1h-1zM1040 192h1v1h-1zM1040 169h1v1h-1zM1062 732h1v1h-1zM1062 709h1v1h-1zM1062 687h1v1h-1zM1062 664h1v1h-1zM1062 642h1v1h-1zM1062 619h1v1h-1zM1062 597h1v1h-1zM1062 574h1v1h-1zM1062 552h1v1h-1zM1062 529h1v1h-1zM1062 507h1v1h-1zM1062 484h1v1h-1zM1062 462h1v1h-1zM1062 439h1v1h-1zM1062 417h1v1h-1zM1062 394h1v1h-1zM1062 372h1v1h-1zM1062 349h1v1h-1zM1062 327h1v1h-1zM1062 304h1v1h-1zM1062 282h1v1h-1zM1062 259h1v1h-1zM1062 237h1v1h-1zM1062 214h1v1h-1zM1062 192h1v1h-1zM1062 169h1v1h-1zM1085 732h1v1h-1zM1085 709h1v1h-1zM1085 687h1v1h-1zM1085 664h1v1h-1zM1085 642h1v1h-1zM1085 619h1v1h-1zM1085 597h1v1h-1zM1085 574h1v1h-1zM1085 552h1v1h-1zM1085 529h1v1h-1zM1085 507h1v1h-1zM1085 484h1v1h-1zM1085 462h1v1h-1zM1085 439h1v1h-1zM1085 417h1v1h-1zM1085 394h1v1h-1zM1085 372h1v1h-1zM1085 349h1v1h-1zM1085 327h1v1h-1zM1085 304h1v1h-1zM1085 282h1v1h-1zM1085 259h1v1h-1zM1085 237h1v1h-1zM1085 214h1v1h-1zM1085 192h1v1h-1zM1085 169h1v1h-1zM1107 732h1v1h-1zM1107 709h1v1h-1zM1107 687h1v1h-1zM1107 664h1v1h-1zM1107 642h1v1h-1zM1107 619h1v1h-1zM1107 597h1v1h-1zM1107 574h1v1h-1zM1107 552h1v1h-1zM1107 529h1v1h-1zM1107 507h1v1h-1zM1107 484h1v1h-1zM1107 462h1v1h-1zM1107 439h1v1h-1zM1107 417h1v1h-1zM1107 394h1v1h-1zM1107 372h1v1h-1zM1107 349h1v1h-1zM1107 327h1v1h-1zM1107 304h1v1h-1zM1107 282h1v1h-1zM1107 259h1v1h-1zM1107 237h1v1h-1zM1107 214h1v1h-1zM1107 192h1v1h-1zM1107 169h1v1h-1zM1130 732h1v1h-1zM1130 709h1v1h-1zM1130 687h1v1h-1zM1130 664h1v1h-1zM1130 642h1v1h-1zM1130 619h1v1h-1zM1130 597h1v1h-1zM1130 574h1v1h-1zM1130 552h1v1h-1zM1130 529h1v1h-1zM1130 507h1v1h-1zM1130 484h1v1h-1zM1130 462h1v1h-1zM1130 439h1v1h-1zM1130 417h1v1h-1zM1130 394h1v1h-1zM1130 372h1v1h-1zM1130 349h1v1h-1zM1130 327h1v1h-1zM1130 304h1v1h-1zM1130 282h1v1h-1zM1130 259h1v1h-1zM1130 237h1v1h-1zM1130 214h1v1h-1zM1130 192h1v1h-1zM1130 169h1v1h-1z"/><line x1="275.0" y1="552.0" x2="365.0" y2="327.0" stroke="#ffffff" stroke-width="1.3"/><line x1="285.45" y1="556.18" x2="375.45" y2="331.18" stroke="#ff0000" stroke-width="1.3"/><path d="M410.42 551.38 L408.44 548.39 L406.54 545.36 L404.71 542.29 L402.95 539.17 L401.27 536.01 L399.67 532.81 L398.15 529.57 L396.71 526.29 L395.35 522.98 L394.07 519.64 L392.87 516.27 L391.75 512.87 L390.72 509.44 L389.77 505.99 L388.91 502.51 L388.13 499.02 L387.44 495.51 L386.83 491.98 L386.31 488.44 L385.88 484.89 L385.53 481.33 L385.27 477.76 L385.10 474.18 L385.01 470.60 L385.01 467.02 L385.10 463.45 L385.28 459.87 L385.54 456.30 L385.89 452.74 L386.33 449.19 L386.86 445.65 L387.47 442.12 L388.17 438.61 L388.95 435.12 L389.82 431.65 L390.77 428.20 L391.80 424.77 L392.92 421.37 L394.13 418.00 L395.41 414.66 L396.78 411.35 L398.22 408.08 L399.75 404.84 L401.35 401.64 L403.03 398.48 L404.79 395.36 L406.63 392.29 L408.54 389.26 L410.52 386.28 L412.57 383.35 L414.70 380.47 L416.89 377.64 L419.16 374.87 L421.49 372.16 L423.88 369.50 L426.34 366.90 L428.87 364.36 L431.45 361.88 L434.10 359.47 L436.80 357.12 L439.56 354.84 L442.37 352.63 L445.24 350.49 L448.16 348.42 L451.12 346.42 L454.14 344.49 L457.20 342.64 L460.31 340.86 L463.46 339.16 L466.65 337.54 L469.88 335.99 L473.14 334.53 L476.44 333.14 L479.77 331.84 L483.14 330.61 L486.53 329.47 L489.95 328.42 L493.40 327.44 L496.86 326.55 L500.35 325.75" fill="none" stroke="#ffffff" stroke-width="1.3"/><path d="M419.72 545.04 L417.89 542.29 L416.13 539.49 L414.44 536.65 L412.82 533.77 L411.27 530.85 L409.80 527.90 L408.39 524.91 L407.06 521.88 L405.80 518.83 L404.62 515.74 L403.51 512.63 L402.48 509.49 L401.53 506.33 L400.66 503.14 L399.86 499.93 L399.14 496.71 L398.50 493.47 L397.94 490.21 L397.46 486.94 L397.06 483.66 L396.74 480.37 L396.50 477.08 L396.34 473.78 L396.26 470.47 L396.26 467.17 L396.34 463.87 L396.51 460.57 L396.75 457.27 L397.08 453.98 L397.48 450.70 L397.96 447.43 L398.53 444.18 L399.17 440.94 L399.89 437.71 L400.70 434.51 L401.58 431.32 L402.53 428.16 L403.57 425.02 L404.68 421.91 L405.86 418.82 L407.12 415.77 L408.46 412.75 L409.87 409.76 L411.35 406.80 L412.90 403.89 L414.52 401.01 L416.22 398.17 L417.98 395.38 L419.81 392.63 L421.71 389.92 L423.67 387.26 L425.69 384.65 L427.78 382.09 L429.94 379.58 L432.15 377.13 L434.42 374.73 L436.75 372.39 L439.13 370.10 L441.58 367.87 L444.07 365.71 L446.62 363.60 L449.22 361.56 L451.86 359.58 L454.56 357.67 L457.30 355.82 L460.08 354.04 L462.91 352.33 L465.78 350.69 L468.68 349.12 L471.63 347.62 L474.61 346.20 L477.62 344.84 L480.67 343.57 L483.75 342.36 L486.85 341.23 L489.98 340.18 L493.14 339.20 L496.32 338.31 L499.52 337.48 L502.74 336.74" fill="none" stroke="#ff0000" stroke-width="1.3"/><circle cx="612.5" cy="439.5" r="112.5" fill="none" stroke="#ffffff" stroke-width="1.3"/><circle cx="612.5" cy="439.5" r="101.25" fill="none" stroke="#ff0000" stroke-width="1.3"/><ellipse cx="815.0" cy="439.5" rx="36" ry="112.5" fill="none" stroke="#ffffff" stroke-width="1.3"/><path d="M839.75 439.50 L839.75 440.45 L839.74 441.40 L839.74 442.35 L839.73 443.30 L839.72 444.25 L839.70 445.20 L839.69 446.15 L839.67 447.10 L839.64 448.04 L839.62 448.99 L839.59 449.94 L839.56 450.88 L839.53 451.83 L839.49 452.77 L839.45 453.71 L839.41 454.65 L839.37 455.59 L839.32 456.53 L839.27 457.47 L839.22 458.40 L839.17 459.34 L839.11 460.27 L839.05 461.20 L838.99 462.13 L838.92 463.05 L838.86 463.98 L838.79 464.90 L838.72 465.82 L838.64 466.74 L838.56 467.66 L838.48 468.57 L838.40 469.48 L838.32 470.39 L838.23 471.30 L838.14 472.20 L838.05 473.10 L837.95 474.00 L837.86 474.89 L837.76 475.79 L837.65 476.68 L837.55 477.56 L837.44 478.44 L837.33 479.32 L837.22 480.20 L837.11 481.07 L836.99 481.94 L836.87 482.81 L836.75 483.67 L836.63 484.53 L836.50 485.38 L836.37 486.24 L836.24 487.08 L836.11 487.92 L835.97 488.76 L835.84 489.60 L835.70 490.43 L835.55 491.25 L835.41 492.08 L835.26 492.89 L835.11 493.71 L834.96 494.51 L834.81 495.32 L834.66 496.12 L834.50 496.91 L834.34 497.70 L834.18 498.48 L834.01 499.26 L833.85 500.04 L833.68 500.80 L833.51 501.57 L833.34 502.33 L833.17 503.08 L832.99 503.83 L832.81 504.57 L832.64 505.30 L832.45 506.03 L832.27 506.76 L832.09 507.48 L831.90 508.19 L831.71 508.90 L831.52 509.60 L831.33 510.29 L831.14 510.98 L830.94 511.66 L830.75 512.34 L830.55 513.01 L830.35 513.67 L830.15 514.33 L829.95 514.98 L829.74 515.62 L829.54 516.26 L829.33 516.89 L829.12 517.51 L828.91 518.13 L828.70 518.73 L828.49 519.34 L828.28 519.93 L828.06 520.52 L827.85 521.10 L827.63 521.67 L827.41 522.24 L827.19 522.79 L826.97 523.34 L826.75 523.89 L826.53 524.42 L826.31 524.95 L826.09 525.47 L825.86 525.98 L825.64 526.48 L825.42 526.98 L825.19 527.47 L824.97 527.94 L824.74 528.42 L824.52 528.88 L824.29 529.33 L824.06 529.78 L823.84 530.21 L823.61 530.64 L823.39 531.06 L823.16 531.47 L822.94 531.88 L822.71 532.27 L822.49 532.65 L822.26 533.03 L822.04 533.40 L821.82 533.75 L821.60 534.10 L821.38 534.44 L821.16 534.77 L820.94 535.09 L820.72 535.41 L820.51 535.71 L820.29 536.00 L820.08 536.28 L819.87 536.56 L819.67 536.82 L819.46 537.08 L819.26 537.32 L819.06 537.56 L818.86 537.79 L818.67 538.00 L818.48 538.21 L818.29 538.41 L818.11 538.60 L817.93 538.78 L817.75 538.95 L817.58 539.11 L817.42 539.26 L817.25 539.41 L817.10 539.54 L816.94 539.67 L816.79 539.78 L816.65 539.89 L816.52 539.99 L816.39 540.09 L816.26 540.17 L816.14 540.25 L816.03 540.32 L815.92 540.38 L815.82 540.44 L815.73 540.49 L815.64 540.53 L815.56 540.57 L815.49 540.60 L815.42 540.63 L815.36 540.66 L815.30 540.68 L815.25 540.70 L815.21 540.71 L815.17 540.72 L815.14 540.73 L815.11 540.74 L815.09 540.74 L815.07 540.74 L815.05 540.75 L815.04 540.75 L815.02 540.75 L815.02 540.75 L815.01 540.75 L815.00 540.75 L814.99 540.75 L814.98 540.75 L814.98 540.75 L814.96 540.75 L814.95 540.75 L814.93 540.74 L814.91 540.74 L814.89 540.74 L814.86 540.73 L814.83 540.72 L814.79 540.71 L814.75 540.70 L814.70 540.68 L814.64 540.66 L814.58 540.63 L814.51 540.60 L814.44 540.57 L814.36 540.53 L814.27 540.49 L814.18 540.44 L814.08 540.38 L813.97 540.32 L813.86 540.25 L813.74 540.17 L813.61 540.09 L813.48 539.99 L813.35 539.89 L813.21 539.78 L813.06 539.67 L812.90 539.54 L812.75 539.41 L812.58 539.26 L812.42 539.11 L812.25 538.95 L812.07 538.78 L811.89 538.60 L811.71 538.41 L811.52 538.21 L811.33 538.00 L811.14 537.79 L810.94 537.56 L810.74 537.32 L810.54 537.08 L810.33 536.82 L810.13 536.56 L809.92 536.28 L809.71 536.00 L809.49 535.71 L809.28 535.41 L809.06 535.09 L808.84 534.77 L808.62 534.44 L808.40 534.10 L808.18 533.75 L807.96 533.40 L807.74 533.03 L807.51 532.65 L807.29 532.27 L807.06 531.88 L806.84 531.47 L806.61 531.06 L806.39 530.64 L806.16 530.21 L805.94 529.78 L805.71 529.33 L805.48 528.88 L805.26 528.42 L805.03 527.94 L804.81 527.47 L804.58 526.98 L804.36 526.48 L804.14 525.98 L803.91 525.47 L803.69 524.95 L803.47 524.42 L803.25 523.89 L803.03 523.34 L802.81 522.79 L802.59 522.24 L802.37 521.67 L802.15 521.10 L801.94 520.52 L801.72 519.93 L801.51 519.34 L801.30 518.73 L801.09 518.13 L800.88 517.51 L800.67 516.89 L800.46 516.26 L800.26 515.62 L800.05 514.98 L799.85 514.33 L799.65 513.67 L799.45 513.01 L799.25 512.34 L799.06 511.66 L798.86 510.98 L798.67 510.29 L798.48 509.60 L798.29 508.90 L798.10 508.19 L797.91 507.48 L797.73 506.76 L797.55 506.03 L797.36 505.30 L797.19 504.57 L797.01 503.83 L796.83 503.08 L796.66 502.33 L796.49 501.57 L796.32 500.80 L796.15 500.04 L795.99 499.26 L795.82 498.48 L795.66 497.70 L795.50 496.91 L795.34 496.12 L795.19 495.32 L795.04 494.51 L794.89 493.71 L794.74 492.89 L794.59 492.08 L794.45 491.25 L794.30 490.43 L794.16 489.60 L794.03 488.76 L793.89 487.92 L793.76 487.08 L793.63 486.24 L793.50 485.38 L793.37 484.53 L793.25 483.67 L793.13 482.81 L793.01 481.94 L792.89 481.07 L792.78 480.20 L792.67 479.32 L792.56 478.44 L792.45 477.56 L792.35 476.68 L792.24 475.79 L792.14 474.89 L792.05 474.00 L791.95 473.10 L791.86 472.20 L791.77 471.30 L791.68 470.39 L791.60 469.48 L791.52 468.57 L791.44 467.66 L791.36 466.74 L791.28 465.82 L791.21 464.90 L791.14 463.98 L791.08 463.05 L791.01 462.13 L790.95 461.20 L790.89 460.27 L790.83 459.34 L790.78 458.40 L790.73 457.47 L790.68 456.53 L790.63 455.59 L790.59 454.65 L790.55 453.71 L790.51 452.77 L790.47 451.83 L790.44 450.88 L790.41 449.94 L790.38 448.99 L790.36 448.04 L790.33 447.10 L790.31 446.15 L790.30 445.20 L790.28 444.25 L790.27 443.30 L790.26 442.35 L790.26 441.40 L790.25 440.45 L790.25 439.50 L790.25 438.55 L790.26 437.60 L790.26 436.65 L790.27 435.70 L790.28 434.75 L790.30 433.80 L790.31 432.85 L790.33 431.90 L790.36 430.96 L790.38 430.01 L790.41 429.06 L790.44 428.12 L790.47 427.17 L790.51 426.23 L790.55 425.29 L790.59 424.35 L790.63 423.41 L790.68 422.47 L790.73 421.53 L790.78 420.60 L790.83 419.66 L790.89 418.73 L790.95 417.80 L791.01 416.87 L791.08 415.95 L791.14 415.02 L791.21 414.10 L791.28 413.18 L791.36 412.26 L791.44 411.34 L791.52 410.43 L791.60 409.52 L791.68 408.61 L791.77 407.70 L791.86 406.80 L791.95 405.90 L792.05 405.00 L792.14 404.11 L792.24 403.21 L792.35 402.32 L792.45 401.44 L792.56 400.56 L792.67 399.68 L792.78 398.80 L792.89 397.93 L793.01 397.06 L793.13 396.19 L793.25 395.33 L793.37 394.47 L793.50 393.62 L793.63 392.76 L793.76 391.92 L793.89 391.08 L794.03 390.24 L794.16 389.40 L794.30 388.57 L794.45 387.75 L794.59 386.92 L794.74 386.11 L794.89 385.29 L795.04 384.49 L795.19 383.68 L795.34 382.88 L795.50 382.09 L795.66 381.30 L795.82 380.52 L795.99 379.74 L796.15 378.96 L796.32 378.20 L796.49 377.43 L796.66 376.67 L796.83 375.92 L797.01 375.17 L797.19 374.43 L797.36 373.70 L797.55 372.97 L797.73 372.24 L797.91 371.52 L798.10 370.81 L798.29 370.10 L798.48 369.40 L798.67 368.71 L798.86 368.02 L799.06 367.34 L799.25 366.66 L799.45 365.99 L799.65 365.33 L799.85 364.67 L800.05 364.02 L800.26 363.38 L800.46 362.74 L800.67 362.11 L800.88 361.49 L801.09 360.87 L801.30 360.27 L801.51 359.66 L801.72 359.07 L801.94 358.48 L802.15 357.90 L802.37 357.33 L802.59 356.76 L802.81 356.21 L803.03 355.66 L803.25 355.11 L803.47 354.58 L803.69 354.05 L803.91 353.53 L804.14 353.02 L804.36 352.52 L804.58 352.02 L804.81 351.53 L805.03 351.06 L805.26 350.58 L805.48 350.12 L805.71 349.67 L805.94 349.22 L806.16 348.79 L806.39 348.36 L806.61 347.94 L806.84 347.53 L807.06 347.12 L807.29 346.73 L807.51 346.35 L807.74 345.97 L807.96 345.60 L808.18 345.25 L808.40 344.90 L808.62 344.56 L808.84 344.23 L809.06 343.91 L809.28 343.59 L809.49 343.29 L809.71 343.00 L809.92 342.72 L810.13 342.44 L810.33 342.18 L810.54 341.92 L810.74 341.68 L810.94 341.44 L811.14 341.21 L811.33 341.00 L811.52 340.79 L811.71 340.59 L811.89 340.40 L812.07 340.22 L812.25 340.05 L812.42 339.89 L812.58 339.74 L812.75 339.59 L812.90 339.46 L813.06 339.33 L813.21 339.22 L813.35 339.11 L813.48 339.01 L813.61 338.91 L813.74 338.83 L813.86 338.75 L813.97 338.68 L814.08 338.62 L814.18 338.56 L814.27 338.51 L814.36 338.47 L814.44 338.43 L814.51 338.40 L814.58 338.37 L814.64 338.34 L814.70 338.32 L814.75 338.30 L814.79 338.29 L814.83 338.28 L814.86 338.27 L814.89 338.26 L814.91 338.26 L814.93 338.26 L814.95 338.25 L814.96 338.25 L814.98 338.25 L814.98 338.25 L814.99 338.25 L815.00 338.25 L815.01 338.25 L815.02 338.25 L815.02 338.25 L815.04 338.25 L815.05 338.25 L815.07 338.26 L815.09 338.26 L815.11 338.26 L815.14 338.27 L815.17 338.28 L815.21 338.29 L815.25 338.30 L815.30 338.32 L815.36 338.34 L815.42 338.37 L815.49 338.40 L815.56 338.43 L815.64 338.47 L815.73 338.51 L815.82 338.56 L815.92 338.62 L816.03 338.68 L816.14 338.75 L816.26 338.83 L816.39 338.91 L816.52 339.01 L816.65 339.11 L816.79 339.22 L816.94 339.33 L817.10 339.46 L817.25 339.59 L817.42 339.74 L817.58 339.89 L817.75 340.05 L817.93 340.22 L818.11 340.40 L818.29 340.59 L818.48 340.79 L818.67 341.00 L818.86 341.21 L819.06 341.44 L819.26 341.68 L819.46 341.92 L819.67 342.18 L819.87 342.44 L820.08 342.72 L820.29 343.00 L820.51 343.29 L820.72 343.59 L820.94 343.91 L821.16 344.23 L821.38 344.56 L821.60 344.90 L821.82 345.25 L822.04 345.60 L822.26 345.97 L822.49 346.35 L822.71 346.73 L822.94 347.12 L823.16 347.53 L823.39 347.94 L823.61 348.36 L823.84 348.79 L824.06 349.22 L824.29 349.67 L824.52 350.12 L824.74 350.58 L824.97 351.06 L825.19 351.53 L825.42 352.02 L825.64 352.52 L825.86 353.02 L826.09 353.53 L826.31 354.05 L826.53 354.58 L826.75 355.11 L826.97 355.66 L827.19 356.21 L827.41 356.76 L827.63 357.33 L827.85 357.90 L828.06 358.48 L828.28 359.07 L828.49 359.66 L828.70 360.27 L828.91 360.87 L829.12 361.49 L829.33 362.11 L829.54 362.74 L829.74 363.38 L829.95 364.02 L830.15 364.67 L830.35 365.33 L830.55 365.99 L830.75 366.66 L830.94 367.34 L831.14 368.02 L831.33 368.71 L831.52 369.40 L831.71 370.10 L831.90 370.81 L832.09 371.52 L832.27 372.24 L832.45 372.97 L832.64 373.70 L832.81 374.43 L832.99 375.17 L833.17 375.92 L833.34 376.67 L833.51 377.43 L833.68 378.20 L833.85 378.96 L834.01 379.74 L834.18 380.52 L834.34 381.30 L834.50 382.09 L834.66 382.88 L834.81 383.68 L834.96 384.49 L835.11 385.29 L835.26 386.11 L835.41 386.92 L835.55 387.75 L835.70 388.57 L835.84 389.40 L835.97 390.24 L836.11 391.08 L836.24 391.92 L836.37 392.76 L836.50 393.62 L836.63 394.47 L836.75 395.33 L836.87 396.19 L836.99 397.06 L837.11 397.93 L837.22 398.80 L837.33 399.68 L837.44 400.56 L837.55 401.44 L837.65 402.32 L837.76 403.21 L837.86 404.11 L837.95 405.00 L838.05 405.90 L838.14 406.80 L838.23 407.70 L838.32 408.61 L838.40 409.52 L838.48 410.43 L838.56 411.34 L838.64 412.26 L838.72 413.18 L838.79 414.10 L838.86 415.02 L838.92 415.95 L838.99 416.87 L839.05 417.80 L839.11 418.73 L839.17 419.66 L839.22 420.60 L839.27 421.53 L839.32 422.47 L839.37 423.41 L839.41 424.35 L839.45 425.29 L839.49 426.23 L839.53 427.17 L839.56 428.12 L839.59 429.06 L839.62 430.01 L839.64 430.96 L839.67 431.90 L839.69 432.85 L839.70 433.80 L839.72 434.75 L839.73 435.70 L839.74 436.65 L839.74 437.60 L839.75 438.55 L839.75 439.50Z" fill="none" stroke="#ff0000" stroke-width="1.3"/><path d="M904.60 552.10 C933.01 539.09 967.27 523.56 958.26 443.04 C949.25 362.52 975.16 350.89 995.20 326.60" fill="none" stroke="#ffffff" stroke-width="1.3"/><path d="M909.28 562.33 L909.71 562.13 L910.14 561.93 L910.58 561.74 L911.01 561.54 L911.45 561.34 L911.89 561.13 L912.33 560.93 L912.77 560.73 L913.22 560.52 L913.66 560.31 L914.11 560.11 L914.56 559.90 L915.01 559.68 L915.46 559.47 L915.92 559.26 L916.37 559.04 L916.83 558.82 L917.29 558.60 L917.75 558.38 L918.21 558.16 L918.68 557.93 L919.14 557.70 L919.60 557.47 L920.07 557.24 L920.54 557.01 L921.01 556.77 L921.48 556.53 L921.95 556.29 L922.42 556.05 L922.89 555.80 L923.36 555.55 L923.84 555.30 L924.31 555.05 L924.79 554.79 L925.26 554.53 L925.74 554.27 L926.22 554.01 L926.69 553.74 L927.17 553.47 L927.65 553.20 L928.13 552.92 L928.61 552.64 L929.08 552.36 L929.56 552.07 L930.04 551.78 L930.52 551.49 L931.00 551.19 L931.48 550.89 L931.96 550.59 L932.44 550.28 L932.92 549.97 L933.40 549.65 L933.88 549.34 L934.35 549.01 L934.83 548.69 L935.31 548.36 L935.79 548.02 L936.26 547.68 L936.74 547.34 L937.21 547.00 L937.69 546.64 L938.16 546.29 L938.63 545.93 L939.10 545.57 L939.57 545.20 L940.04 544.82 L940.51 544.45 L940.98 544.06 L941.44 543.68 L941.90 543.28 L942.37 542.89 L942.83 542.49 L943.29 542.08 L943.75 541.67 L944.20 541.25 L944.66 540.83 L945.11 540.40 L945.56 539.97 L946.01 539.53 L946.46 539.09 L946.90 538.64 L947.34 538.19 L947.78 537.73 L948.22 537.27 L948.66 536.80 L949.09 536.33 L949.52 535.85 L949.95 535.36 L950.37 534.87 L950.79 534.37 L951.21 533.87 L951.63 533.36 L952.04 532.85 L952.45 532.33 L952.86 531.81 L953.26 531.28 L953.67 530.74 L954.06 530.20 L954.46 529.65 L954.85 529.09 L955.24 528.54 L955.62 527.97 L956.00 527.40 L956.38 526.82 L956.75 526.24 L957.12 525.65 L957.48 525.05 L957.84 524.45 L958.20 523.85 L958.55 523.23 L958.90 522.61 L959.25 521.99 L959.59 521.36 L959.92 520.72 L960.25 520.08 L960.58 519.43 L960.91 518.77 L961.22 518.11 L961.54 517.44 L961.85 516.77 L962.15 516.09 L962.45 515.40 L962.75 514.71 L963.04 514.01 L963.33 513.31 L963.61 512.60 L963.89 511.88 L964.16 511.15 L964.42 510.42 L964.69 509.69 L964.94 508.95 L965.20 508.20 L965.44 507.44 L965.69 506.68 L965.92 505.91 L966.16 505.14 L966.38 504.36 L966.60 503.57 L966.82 502.78 L967.03 501.98 L967.24 501.17 L967.44 500.35 L967.63 499.53 L967.82 498.71 L968.01 497.87 L968.19 497.03 L968.36 496.19 L968.53 495.33 L968.70 494.47 L968.85 493.60 L969.01 492.73 L969.15 491.85 L969.29 490.96 L969.43 490.06 L969.56 489.16 L969.69 488.25 L969.81 487.34 L969.92 486.41 L970.03 485.48 L970.13 484.54 L970.23 483.60 L970.32 482.64 L970.40 481.68 L970.48 480.72 L970.55 479.74 L970.62 478.76 L970.68 477.77 L970.74 476.77 L970.79 475.76 L970.84 474.75 L970.87 473.73 L970.91 472.70 L970.93 471.67 L970.95 470.62 L970.97 469.57 L970.98 468.51 L970.98 467.44 L970.97 466.36 L970.97 465.28 L970.95 464.18 L970.93 463.08 L970.90 461.97 L970.86 460.86 L970.82 459.73 L970.78 458.59 L970.72 457.45 L970.66 456.30 L970.60 455.14 L970.52 453.97 L970.45 452.79 L970.36 451.61 L970.27 450.41 L970.17 449.21 L970.06 447.99 L969.95 446.77 L969.84 445.54 L969.71 444.30 L969.58 443.05 L969.44 441.81 L969.31 440.62 L969.19 439.46 L969.07 438.31 L968.96 437.17 L968.85 436.04 L968.74 434.93 L968.65 433.82 L968.55 432.72 L968.46 431.64 L968.38 430.56 L968.30 429.50 L968.23 428.44 L968.16 427.40 L968.09 426.36 L968.03 425.34 L967.98 424.33 L967.93 423.32 L967.88 422.33 L967.84 421.34 L967.80 420.37 L967.77 419.40 L967.74 418.45 L967.72 417.50 L967.70 416.57 L967.69 415.64 L967.68 414.72 L967.67 413.82 L967.67 412.92 L967.67 412.03 L967.68 411.15 L967.69 410.28 L967.70 409.42 L967.72 408.57 L967.74 407.72 L967.77 406.89 L967.80 406.06 L967.83 405.25 L967.87 404.44 L967.91 403.64 L967.96 402.85 L968.01 402.07 L968.06 401.30 L968.12 400.53 L968.18 399.77 L968.24 399.03 L968.31 398.29 L968.38 397.55 L968.45 396.83 L968.53 396.11 L968.61 395.41 L968.69 394.71 L968.78 394.01 L968.87 393.33 L968.97 392.65 L969.06 391.98 L969.16 391.32 L969.26 390.67 L969.37 390.02 L969.48 389.38 L969.59 388.75 L969.70 388.13 L969.82 387.51 L969.94 386.90 L970.06 386.30 L970.19 385.70 L970.32 385.11 L970.45 384.53 L970.58 383.95 L970.72 383.38 L970.86 382.81 L971.00 382.26 L971.14 381.71 L971.29 381.16 L971.44 380.62 L971.59 380.09 L971.74 379.56 L971.89 379.04 L972.05 378.53 L972.21 378.02 L972.37 377.52 L972.54 377.02 L972.70 376.53 L972.87 376.04 L973.04 375.56 L973.22 375.08 L973.39 374.61 L973.57 374.14 L973.75 373.68 L973.93 373.22 L974.11 372.77 L974.29 372.32 L974.48 371.88 L974.67 371.44 L974.86 371.01 L975.05 370.58 L975.24 370.15 L975.44 369.73 L975.64 369.31 L975.84 368.90 L976.04 368.48 L976.24 368.08 L976.45 367.68 L976.65 367.28 L976.86 366.88 L977.07 366.49 L977.28 366.10 L977.50 365.71 L977.71 365.33 L977.93 364.95 L978.15 364.57 L978.37 364.19 L978.59 363.82 L978.82 363.45 L979.05 363.09 L979.27 362.72 L979.50 362.36 L979.73 362.00 L979.97 361.64 L980.20 361.29 L980.44 360.93 L980.68 360.58 L980.92 360.23 L981.16 359.89 L981.40 359.54 L981.65 359.20 L981.90 358.85 L982.15 358.51 L982.40 358.17 L982.65 357.84 L982.90 357.50 L983.16 357.16 L983.42 356.83 L983.68 356.49 L983.94 356.16 L984.20 355.83 L984.46 355.50 L984.73 355.17 L985.00 354.84 L985.27 354.51 L985.54 354.19 L985.81 353.86 L986.09 353.53 L986.36 353.21 L986.64 352.88 L986.92 352.56 L987.20 352.23 L987.49 351.91 L987.77 351.58 L988.06 351.26 L988.35 350.93 L988.64 350.61 L988.93 350.28 L989.22 349.96 L989.51 349.63 L989.81 349.31 L990.11 348.98 L990.40 348.66 L990.70 348.33 L991.01 348.00 L991.31 347.67 L991.61 347.34 L991.92 347.02 L992.23 346.69 L992.53 346.35 L992.84 346.02 L993.15 345.69 L993.47 345.36 L993.78 345.02 L994.09 344.69 L994.41 344.35 L994.73 344.01 L995.04 343.67 L995.36 343.33 L995.68 342.99 L996.00 342.64 L996.32 342.30 L996.65 341.95 L996.97 341.60 L997.29 341.25 L997.62 340.89 L997.94 340.54 L998.27 340.18 L998.60 339.82 L998.92 339.46 L999.25 339.10 L999.58 338.74 L999.91 338.37 L1000.24 338.00 L1000.57 337.63 L1000.90 337.25 L1001.23 336.87 L1001.56 336.49 L1001.89 336.11 L1002.22 335.73 L1002.55 335.34 L1002.88 334.95 L1003.22 334.56 L1003.55 334.16 L1003.86 333.78" fill="none" stroke="#ff0000" stroke-width="1.3"/></g></svg><svg style="left:0;top:0" width="1500" height="844"><g opacity="0.8" fill="none"><circle cx="961" cy="432" r="35.5" stroke="#56646f" stroke-width="7"/><circle cx="961" cy="432" r="38.6" stroke="#8ea0ae" stroke-width="1"/><circle cx="961" cy="432" r="37" stroke="#7a8c9a" stroke-width="1"/><circle cx="961" cy="432" r="35.4" stroke="#8194a2" stroke-width="0.9"/><circle cx="961" cy="432" r="33.8" stroke="#6a7b88" stroke-width="0.9"/><circle cx="961" cy="432" r="32.3" stroke="#2e3840" stroke-width="1.2"/></g><rect x="945" y="430" width="32" height="4" fill="#b5b5b5"/><rect x="959" y="416" width="4" height="32" fill="#b5b5b5"/><circle cx="961" cy="432" r="2" fill="#222" stroke="#ccc" stroke-width="0.8"/></svg><div class="t" style="left:84px;top:82px;font-size:13.4px;color:#111">Afstand:</div><div class="a" style="left:149px;top:79px;width:73px;height:19px;background:#fff;box-shadow:0 0.5px 1px #bbb"></div><div class="t" style="left:150px;top:82px;font-size:13.4px;color:#111">0.5</div><div class="t" style="left:245px;top:82px;font-size:13.4px;color:#111">Aantal:</div><div class="a" style="left:301px;top:80px;width:61px;height:17px;background:#fff;box-shadow:0 0.5px 1px #bbb"></div><div class="t" style="left:302px;top:82px;font-size:13.4px;color:#111">1</div><div class="a" style="left:364px;top:78px;width:13px;height:20px;background:#fff;border-radius:5px;box-shadow:0 0.5px 1px #aaa"></div><svg style="left:364px;top:78px" width="13" height="20"><path d="M3.5 7 L6.5 4 L9.5 7 M3.5 13 L6.5 16 L9.5 13" fill="none" stroke="#222" stroke-width="1.3"/></svg><div class="t" style="left:401px;top:82px;font-size:13.2px;color:#111">Polylijn mode:</div><div class="t" style="left:609px;top:82px;font-size:13.4px;color:#111">Hoekpunten:</div><div class="a" style="left:810px;top:81px;width:13px;height:13px;background:#fff;border-radius:3px;box-shadow:0 0.5px 1px #999"></div><svg style="left:810px;top:81px" width="13" height="13"><path d="M3 6.5 L5.5 9.5 L10 3" fill="none" stroke="#111" stroke-width="2"/></svg><div class="t" style="left:828px;top:82px;font-size:13.3px;color:#111">Knippen</div><div class="a" style="left:1155px;top:130px;width:60px;height:26px;background:linear-gradient(#e9e9e9,#f4f4f4);border:1px solid #a9a9a9;border-top:0"></div><div class="a" style="left:1215px;top:130px;width:60px;height:26px;background:linear-gradient(#e9e9e9,#f4f4f4);border:1px solid #a9a9a9;border-top:0"></div><div class="a" style="left:1275px;top:130px;width:60px;height:26px;background:linear-gradient(#e9e9e9,#f4f4f4);border:1px solid #a9a9a9;border-top:0"></div><div class="a" style="left:1335px;top:130px;width:60px;height:26px;background:linear-gradient(#e9e9e9,#f4f4f4);border:1px solid #a9a9a9;border-top:0"></div><div class="a" style="left:1395px;top:130px;width:60px;height:26px;background:linear-gradient(#e9e9e9,#f4f4f4);border:1px solid #a9a9a9;border-top:0"></div><div class="a" style="left:1155px;top:155px;width:300px;height:2px;background:#b9b9b9"></div><div class="a" style="left:1161px;top:163px;width:16px;height:10px;background:#fff;border:1px solid #111"></div><div class="t" style="left:1183px;top:160px;font-size:14px;color:#111">0</div><div class="a" style="left:1161px;top:183px;width:16px;height:10px;background:#f00;border:1px solid #111"></div><div class="t" style="left:1183px;top:180px;font-size:14px;color:#111">Offset</div><div class="t" style="left:2px;top:807px;font-size:10.5px;color:#111">76.4889,5.3333</div><div class="t" style="left:2px;top:827px;font-size:10.5px;color:#111">@76.4889,5.3333</div><div class="a" style="left:254px;top:802px;width:1px;height:40px;background:#999"></div><div class="t" style="left:256px;top:807px;font-size:10.5px;color:#111">76.6746&lt;4°</div><div class="t" style="left:256px;top:827px;font-size:10.5px;color:#111">@76.6746&lt;4°</div><div class="a" style="left:506px;top:819px;width:6px;height:6px;border-radius:3px;background:#c6c6c6"></div><div class="t" style="left:430px;top:812px;width:268px;font-size:10.3px;color:#111;text-align:right">Kies lijn, boog, cirkel, ellips, spline of</div><div class="t" style="left:430px;top:823px;width:268px;font-size:10.3px;color:#111;text-align:right">polylijn</div><svg style="left:716px;top:805px" width="20" height="32"><rect x="1.5" y="1" width="17" height="30" rx="8.5" fill="#fff" stroke="#333" stroke-width="1"/><path d="M1.5 13 H18.5" stroke="#333"/><path d="M10 1 V13" stroke="#333" stroke-width="0.8"/><rect x="8" y="3.5" width="4" height="7" rx="2" fill="#fff" stroke="#333" stroke-width="0.8"/></svg><div class="t" style="left:754px;top:817px;font-size:10.5px;color:#111">Annuleer</div><div class="a" style="left:939px;top:819px;width:6px;height:6px;border-radius:3px;background:#c6c6c6"></div><div class="t" style="left:948px;top:817px;font-size:10.3px;color:#111">Geen objecten geselecteerd.</div><div class="a" style="left:1269px;top:819px;width:6px;height:6px;border-radius:3px;background:#c6c6c6"></div><svg style="left:0;top:0" width="1500" height="844" font-family="Liberation Sans"><defs>
<linearGradient id="gFl" x1="0" y1="0" x2="0" y2="1"><stop offset="0" stop-color="#7aa9f5"/><stop offset="1" stop-color="#3d78e6"/></linearGradient>
<linearGradient id="gFold" x1="0" y1="0" x2="0" y2="1"><stop offset="0" stop-color="#8fb3e0"/><stop offset="1" stop-color="#5a8cc8"/></linearGradient>
<radialGradient id="gGlow"><stop offset="0.25" stop-color="#ffffa0"/><stop offset="0.6" stop-color="#eeee20"/><stop offset="1" stop-color="#e8e830" stop-opacity="0"/></radialGradient>
<radialGradient id="gLens" cx="0.4" cy="0.35" r="0.7"><stop offset="0" stop-color="#a8cbf5"/><stop offset="1" stop-color="#3a78d0"/></radialGradient>
<radialGradient id="gLensG" cx="0.4" cy="0.35" r="0.7"><stop offset="0" stop-color="#d8d8dc"/><stop offset="1" stop-color="#a8b0bc"/></radialGradient>
<linearGradient id="gPage" x1="0" y1="0" x2="1" y2="1"><stop offset="0" stop-color="#fafafa"/><stop offset="1" stop-color="#e6e6e6"/></linearGradient>
<linearGradient id="gBtn" x1="0" y1="0" x2="0" y2="1"><stop offset="0" stop-color="#e4e4e4"/><stop offset="0.45" stop-color="#f0f0f0"/><stop offset="1" stop-color="#f6f6f6"/></linearGradient>
</defs><rect x="7" y="32" width="2" height="2" fill="#8a8a8a"/><rect x="7" y="38" width="2" height="2" fill="#8a8a8a"/><rect x="7" y="44" width="2" height="2" fill="#8a8a8a"/><rect x="7" y="50" width="2" height="2" fill="#8a8a8a"/><rect x="7" y="56" width="2" height="2" fill="#8a8a8a"/><rect x="87" y="32" width="2" height="2" fill="#8a8a8a"/><rect x="87" y="38" width="2" height="2" fill="#8a8a8a"/><rect x="87" y="44" width="2" height="2" fill="#8a8a8a"/><rect x="87" y="50" width="2" height="2" fill="#8a8a8a"/><rect x="87" y="56" width="2" height="2" fill="#8a8a8a"/><rect x="402" y="32" width="2" height="2" fill="#8a8a8a"/><rect x="402" y="38" width="2" height="2" fill="#8a8a8a"/><rect x="402" y="44" width="2" height="2" fill="#8a8a8a"/><rect x="402" y="50" width="2" height="2" fill="#8a8a8a"/><rect x="402" y="56" width="2" height="2" fill="#8a8a8a"/><rect x="707" y="32" width="2" height="2" fill="#8a8a8a"/><rect x="707" y="38" width="2" height="2" fill="#8a8a8a"/><rect x="707" y="44" width="2" height="2" fill="#8a8a8a"/><rect x="707" y="50" width="2" height="2" fill="#8a8a8a"/><rect x="707" y="56" width="2" height="2" fill="#8a8a8a"/><rect x="186.0" y="26" width="1" height="1" fill="#555"/><rect x="186.0" y="29" width="1" height="1" fill="#555"/><rect x="186.0" y="32" width="1" height="1" fill="#555"/><rect x="186.0" y="35" width="1" height="1" fill="#555"/><rect x="186.0" y="38" width="1" height="1" fill="#555"/><rect x="186.0" y="41" width="1" height="1" fill="#555"/><rect x="186.0" y="44" width="1" height="1" fill="#555"/><rect x="186.0" y="47" width="1" height="1" fill="#555"/><rect x="186.0" y="50" width="1" height="1" fill="#555"/><rect x="186.0" y="53" width="1" height="1" fill="#555"/><rect x="186.0" y="56" width="1" height="1" fill="#555"/><rect x="186.0" y="59" width="1" height="1" fill="#555"/><rect x="186.0" y="62" width="1" height="1" fill="#555"/><rect x="186.0" y="65" width="1" height="1" fill="#555"/><rect x="288.0" y="26" width="1" height="1" fill="#555"/><rect x="288.0" y="29" width="1" height="1" fill="#555"/><rect x="288.0" y="32" width="1" height="1" fill="#555"/><rect x="288.0" y="35" width="1" height="1" fill="#555"/><rect x="288.0" y="38" width="1" height="1" fill="#555"/><rect x="288.0" y="41" width="1" height="1" fill="#555"/><rect x="288.0" y="44" width="1" height="1" fill="#555"/><rect x="288.0" y="47" width="1" height="1" fill="#555"/><rect x="288.0" y="50" width="1" height="1" fill="#555"/><rect x="288.0" y="53" width="1" height="1" fill="#555"/><rect x="288.0" y="56" width="1" height="1" fill="#555"/><rect x="288.0" y="59" width="1" height="1" fill="#555"/><rect x="288.0" y="62" width="1" height="1" fill="#555"/><rect x="288.0" y="65" width="1" height="1" fill="#555"/><rect x="344.0" y="26" width="1" height="1" fill="#555"/><rect x="344.0" y="29" width="1" height="1" fill="#555"/><rect x="344.0" y="32" width="1" height="1" fill="#555"/><rect x="344.0" y="35" width="1" height="1" fill="#555"/><rect x="344.0" y="38" width="1" height="1" fill="#555"/><rect x="344.0" y="41" width="1" height="1" fill="#555"/><rect x="344.0" y="44" width="1" height="1" fill="#555"/><rect x="344.0" y="47" width="1" height="1" fill="#555"/><rect x="344.0" y="50" width="1" height="1" fill="#555"/><rect x="344.0" y="53" width="1" height="1" fill="#555"/><rect x="344.0" y="56" width="1" height="1" fill="#555"/><rect x="344.0" y="59" width="1" height="1" fill="#555"/><rect x="344.0" y="62" width="1" height="1" fill="#555"/><rect x="344.0" y="65" width="1" height="1" fill="#555"/><rect x="501.0" y="26" width="1" height="1" fill="#555"/><rect x="501.0" y="29" width="1" height="1" fill="#555"/><rect x="501.0" y="32" width="1" height="1" fill="#555"/><rect x="501.0" y="35" width="1" height="1" fill="#555"/><rect x="501.0" y="38" width="1" height="1" fill="#555"/><rect x="501.0" y="41" width="1" height="1" fill="#555"/><rect x="501.0" y="44" width="1" height="1" fill="#555"/><rect x="501.0" y="47" width="1" height="1" fill="#555"/><rect x="501.0" y="50" width="1" height="1" fill="#555"/><rect x="501.0" y="53" width="1" height="1" fill="#555"/><rect x="501.0" y="56" width="1" height="1" fill="#555"/><rect x="501.0" y="59" width="1" height="1" fill="#555"/><rect x="501.0" y="62" width="1" height="1" fill="#555"/><rect x="501.0" y="65" width="1" height="1" fill="#555"/><rect x="557.0" y="26" width="1" height="1" fill="#555"/><rect x="557.0" y="29" width="1" height="1" fill="#555"/><rect x="557.0" y="32" width="1" height="1" fill="#555"/><rect x="557.0" y="35" width="1" height="1" fill="#555"/><rect x="557.0" y="38" width="1" height="1" fill="#555"/><rect x="557.0" y="41" width="1" height="1" fill="#555"/><rect x="557.0" y="44" width="1" height="1" fill="#555"/><rect x="557.0" y="47" width="1" height="1" fill="#555"/><rect x="557.0" y="50" width="1" height="1" fill="#555"/><rect x="557.0" y="53" width="1" height="1" fill="#555"/><rect x="557.0" y="56" width="1" height="1" fill="#555"/><rect x="557.0" y="59" width="1" height="1" fill="#555"/><rect x="557.0" y="62" width="1" height="1" fill="#555"/><rect x="557.0" y="65" width="1" height="1" fill="#555"/><rect x="853.0" y="26" width="1" height="1" fill="#555"/><rect x="853.0" y="29" width="1" height="1" fill="#555"/><rect x="853.0" y="32" width="1" height="1" fill="#555"/><rect x="853.0" y="35" width="1" height="1" fill="#555"/><rect x="853.0" y="38" width="1" height="1" fill="#555"/><rect x="853.0" y="41" width="1" height="1" fill="#555"/><rect x="853.0" y="44" width="1" height="1" fill="#555"/><rect x="853.0" y="47" width="1" height="1" fill="#555"/><rect x="853.0" y="50" width="1" height="1" fill="#555"/><rect x="853.0" y="53" width="1" height="1" fill="#555"/><rect x="853.0" y="56" width="1" height="1" fill="#555"/><rect x="853.0" y="59" width="1" height="1" fill="#555"/><rect x="853.0" y="62" width="1" height="1" fill="#555"/><rect x="853.0" y="65" width="1" height="1" fill="#555"/><rect x="910.0" y="26" width="1" height="1" fill="#555"/><rect x="910.0" y="29" width="1" height="1" fill="#555"/><rect x="910.0" y="32" width="1" height="1" fill="#555"/><rect x="910.0" y="35" width="1" height="1" fill="#555"/><rect x="910.0" y="38" width="1" height="1" fill="#555"/><rect x="910.0" y="41" width="1" height="1" fill="#555"/><rect x="910.0" y="44" width="1" height="1" fill="#555"/><rect x="910.0" y="47" width="1" height="1" fill="#555"/><rect x="910.0" y="50" width="1" height="1" fill="#555"/><rect x="910.0" y="53" width="1" height="1" fill="#555"/><rect x="910.0" y="56" width="1" height="1" fill="#555"/><rect x="910.0" y="59" width="1" height="1" fill="#555"/><rect x="910.0" y="62" width="1" height="1" fill="#555"/><rect x="910.0" y="65" width="1" height="1" fill="#555"/><path d="M27.5 35.5 L27.5 52 L31.5 48.5 L34.5 55.5 L37.5 54 L34.5 47.5 L39.5 47.5 Z" fill="#fff" stroke="#333" stroke-width="1.1" stroke-linejoin="round"/><rect x="100.5" y="32.5" width="24" height="27" rx="1.5" fill="url(#gPage)" stroke="#8a8a8a"/><rect x="101" y="59" width="23" height="1.5" fill="#9a9a9a"/><circle cx="121" cy="37.5" r="6.5" fill="url(#gGlow)"/><path d="M144 35 L151 35 L151 33 L157 33 L157 35 L171 35 L171 57 L146 57 Z" fill="#9a9a9a" stroke="#6e6e6e" stroke-width="0.8"/><path d="M151 32.5 L172 32.5 L170 50 L148 50 Z" fill="#f6f6f6" stroke="#8a8a8a" stroke-width="0.8"/><path d="M152 36 H168 M152 39 H168" stroke="#b8b8b8" stroke-width="1.2"/><path d="M150.5 43.5 L175.5 43.5 L171.5 58.5 L146 58.5 Z" fill="url(#gFold)" stroke="#4a78b8" stroke-width="0.8"/><rect x="202.5" y="33.5" width="24" height="24" rx="2.5" fill="url(#gFl)" stroke="#2828a0" stroke-width="1.2"/><rect x="206" y="34.5" width="17" height="10" fill="#eef2ff"/><rect x="208" y="48" width="12" height="9.5" fill="#d8d8d8"/><rect x="210" y="50" width="2" height="5" fill="#1a4fd0"/><rect x="248.5" y="33.5" width="24" height="24" rx="2.5" fill="url(#gFl)" stroke="#2828a0" stroke-width="1.2"/><rect x="252" y="34.5" width="17" height="10" fill="#eef2ff"/><rect x="254" y="48" width="12" height="9.5" fill="#d8d8d8"/><rect x="256" y="50" width="2" height="5" fill="#1a4fd0"/><path d="M258 52 L272 36 L275.5 39 L261.5 55 L257 56.5 Z" fill="#f0a830" stroke="#8a4a10" stroke-width="0.9"/><path d="M272 36 L273.5 34 L277 37 L275.5 39 Z" fill="#e04040" stroke="#8a2020" stroke-width="0.8"/><g fill="#f9a12b" stroke="#111" stroke-width="1.2"><circle cx="316.5" cy="35.5" r="2.3"/><circle cx="310" cy="38.5" r="2.3"/><circle cx="323" cy="38.5" r="2.3"/><circle cx="307.5" cy="44" r="2"/><circle cx="325.5" cy="44" r="2"/></g><path d="M309 46 Q316.5 37 324 46 Z" fill="#f9a12b"/><path d="M316.5 36 V45 M310 38.5 L316.5 45 M323 38.5 L316.5 45" stroke="#f9a12b" stroke-width="2.6"/><rect x="305" y="45" width="24" height="13.5" rx="3" fill="#111"/><rect x="305" y="44.5" width="24" height="1.3" fill="#f9a12b"/><text x="317" y="56.5" font-size="12" font-weight="bold" fill="#fff" text-anchor="middle" textLength="20" lengthAdjust="spacingAndGlyphs">SVG</text><rect x="365.5" y="32.5" width="20" height="14" rx="1" fill="#ececec" stroke="#a0a0a0" stroke-width="1"/><path d="M367 35 H383" stroke="#c8c8c8" stroke-width="1"/><path d="M360 46 Q360 44 362 44 H385 Q387 44 387 46 V56 Q387 58 385 58 H361 Q359.5 58 359.5 56 Z" fill="#e4e4e4" stroke="#8e8e8e" stroke-width="1"/><rect x="361" y="49" width="24" height="1.2" fill="#bdbdbd"/><rect x="360" y="57" width="27" height="2.5" rx="1" fill="#b8b8b8"/><path d="M372.5 45.5 L380.5 52.5" stroke="#7a7a7a" stroke-width="3.2" stroke-linecap="round"/><circle cx="368.5" cy="41" r="6.2" fill="url(#gLens)" stroke="#d0d4d8" stroke-width="2"/><circle cx="368.5" cy="41" r="7.3" fill="none" stroke="#8a8a8a" stroke-width="0.7"/><defs><linearGradient id="gUndo" x1="0" y1="0" x2="1" y2="1"><stop offset="0" stop-color="#8ad88a"/><stop offset="1" stop-color="#2f9f3f"/></linearGradient><linearGradient id="gRedo" x1="1" y1="0" x2="0" y2="1"><stop offset="0" stop-color="#bfe4bf"/><stop offset="1" stop-color="#86c496"/></linearGradient></defs><path d="M413.7 37.6 L417.6 42.4 Q423 33.7 431.4 33.7 Q441.6 34 441.6 45 Q441.2 56.5 426 57.5 L426.6 55.8 Q437.4 53 437.4 44.2 Q437.2 40.3 429.5 40.3 Q425.5 40.5 421.5 46.3 L426.9 51.7 L413.7 51.7 Z" fill="url(#gUndo)" stroke="#157a2a" stroke-width="0.9" stroke-linejoin="round"/><path d="M413.7 37.6 L417.6 42.4 Q423 33.7 431.4 33.7 Q441.6 34 441.6 45 Q441.2 56.5 426 57.5 L426.6 55.8 Q437.4 53 437.4 44.2 Q437.2 40.3 429.5 40.3 Q425.5 40.5 421.5 46.3 L426.9 51.7 L413.7 51.7 Z" transform="translate(902.1 0) scale(-1 1)" fill="url(#gRedo)" stroke="#7cb88c" stroke-width="0.9" stroke-linejoin="round"/><path d="M519 51.5 L533 35 Q535 33 537 34.5 L541.5 38.5 Q543 40 541.5 42 L527.5 57.5 Z" fill="#de8a8a" stroke="#c07070" stroke-width="0.8"/><path d="M519 51.5 L523.5 47 L532 54.5 L527.5 57.5 Z" fill="#f4f4f4" stroke="#b0b0b0" stroke-width="0.8"/><path d="M524 45 L536 37.5 L539 40.5 L528 51 Z" fill="#f2dede"/><ellipse cx="533" cy="57.5" rx="10" ry="1.6" fill="#c8c8c8" opacity="0.6"/><path d="M587 52 L590 31.5 L591.5 32 L590 50 Z" fill="#f0f0f0" stroke="#a8a8a8" stroke-width="0.8"/><path d="M588 50 L599.5 41.5 L600 44 L590 52 Z" fill="#f0f0f0" stroke="#a8a8a8" stroke-width="0.8"/><ellipse cx="579" cy="53" rx="4" ry="3" fill="none" stroke="#e08888" stroke-width="2.2"/><ellipse cx="586" cy="57.5" rx="2.5" ry="3.5" fill="none" stroke="#e08888" stroke-width="2.2"/><path d="M572.5 58 H577.5 M575 55.5 V60.5" stroke="#333" stroke-width="1"/><path d="M618 31 H631 L633 33 V52 H618 Z" fill="#f2f2f2" stroke="#c8c8c8" stroke-width="0.9"/><path d="M626 37 H644 L646 39 V58 L643 61 H626 Z" fill="#f4f4f4" stroke="#b4b4b4" stroke-width="0.9"/><path d="M629 42 H642 M629 45 H642 M629 48 H642" stroke="#c8c8c8" stroke-width="0.8"/><path d="M617.5 58 H622.5 M620 55.5 V60.5" stroke="#333" stroke-width="1"/><rect x="664.5" y="33.5" width="26" height="27" rx="1.5" fill="#c98a2a" stroke="#8a5a10" stroke-width="0.8"/><rect x="667" y="36" width="21" height="22" fill="#f6f6f6"/><path d="M670 41 H685 M670 44 H685 M670 47 H685 M670 50 H682" stroke="#b0b0b0" stroke-width="0.9"/><rect x="671" y="31" width="13" height="5" rx="1" fill="#a8a8a8" stroke="#777" stroke-width="0.6"/><path d="M682 58 L688 52 V58 Z" fill="#b8b8b8"/><path d="M724.5 55 L738 38 Q740 36 742 37.5 L743.5 39 Q745 40.5 743.5 42.5 L730 57 L724 57.5 Z" fill="#e03a2a" stroke="#6a2010" stroke-width="0.9"/><path d="M724.5 55 L727 50.5 L730.5 54 L724 57.5 Z" fill="#f5d9a0"/><path d="M737.5 38.5 L743 43" stroke="#d8d8d8" stroke-width="2"/><rect x="722" y="56" width="22" height="1.2" fill="#f00"/><rect x="764.5" y="35.5" width="29" height="21" fill="#00007a" stroke="#222" stroke-width="0.8"/><path d="M768 53 L790 39 V53 Z" fill="none" stroke="#ddd" stroke-width="1.2" stroke-dasharray="3 1.5"/><rect x="804" y="25" width="43" height="43" rx="4" fill="#b9b9b9"/><rect x="861" y="25" width="43" height="43" rx="4" fill="#b9b9b9"/><circle cx="825" cy="46" r="13" fill="none" stroke="#111" stroke-width="1.8"/><path d="M811 60 L839 32" stroke="#0000ff" stroke-width="1.1"/><rect x="870" y="34" width="2" height="2" fill="#111"/><rect x="870" y="42" width="2" height="2" fill="#111"/><rect x="870" y="50" width="2" height="2" fill="#111"/><rect x="870" y="58" width="2" height="2" fill="#111"/><rect x="878" y="34" width="2" height="2" fill="#111"/><rect x="878" y="42" width="2" height="2" fill="#111"/><rect x="878" y="50" width="2" height="2" fill="#111"/><rect x="878" y="58" width="2" height="2" fill="#111"/><rect x="886" y="34" width="2" height="2" fill="#111"/><rect x="886" y="42" width="2" height="2" fill="#111"/><rect x="886" y="50" width="2" height="2" fill="#111"/><rect x="886" y="58" width="2" height="2" fill="#111"/><rect x="894" y="34" width="2" height="2" fill="#111"/><rect x="894" y="42" width="2" height="2" fill="#111"/><rect x="894" y="50" width="2" height="2" fill="#111"/><rect x="894" y="58" width="2" height="2" fill="#111"/><path d="M942.5 49 L950.5 57" stroke="#5a5a5a" stroke-width="3.5" stroke-linecap="round"/><ellipse cx="938.5" cy="56" rx="11" ry="2" fill="#000" opacity="0.06"/><circle cx="935.5" cy="42" r="10.5" fill="#ecebe6" stroke="#b8b6ae" stroke-width="1"/><circle cx="935.5" cy="42" r="8.3" fill="url(#gLens)" stroke="#3a6ab0" stroke-width="0.6"/><path d="M930.5 42 H940.5 M935.5 37 V47.0" stroke="#fff" stroke-width="2.6"/><path d="M988.5 49 L996.5 57" stroke="#5a5a5a" stroke-width="3.5" stroke-linecap="round"/><ellipse cx="984.5" cy="56" rx="11" ry="2" fill="#000" opacity="0.06"/><circle cx="981.5" cy="42" r="10.5" fill="#ecebe6" stroke="#b8b6ae" stroke-width="1"/><circle cx="981.5" cy="42" r="8.3" fill="url(#gLens)" stroke="#3a6ab0" stroke-width="0.6"/><path d="M976.5 42 H986.5" stroke="#fff" stroke-width="2.6"/><path d="M1034.5 49 L1042.5 57" stroke="#5a5a5a" stroke-width="3.5" stroke-linecap="round"/><ellipse cx="1030.5" cy="56" rx="11" ry="2" fill="#000" opacity="0.06"/><circle cx="1027.5" cy="42" r="10.5" fill="#ecebe6" stroke="#b8b6ae" stroke-width="1"/><circle cx="1027.5" cy="42" r="8.3" fill="url(#gLens)" stroke="#3a6ab0" stroke-width="0.6"/><path d="M1022.5 40 V37 H1025.5 M1029.5 37 H1032.5 V40 M1032.5 44 V47 H1029.5 M1025.5 47 H1022.5 V44" fill="none" stroke="#fff" stroke-width="1.6"/><path d="M1080.5 49 L1088.5 57" stroke="#5a5a5a" stroke-width="3.5" stroke-linecap="round"/><ellipse cx="1076.5" cy="56" rx="11" ry="2" fill="#000" opacity="0.06"/><circle cx="1073.5" cy="42" r="10.5" fill="#ecebe6" stroke="#b8b6ae" stroke-width="1"/><circle cx="1073.5" cy="42" r="8.3" fill="url(#gLensG)" stroke="#3a6ab0" stroke-width="0.6"/><path d="M1068.5 40 V37 H1071.5 M1075.5 37 H1078.5 V40 M1078.5 44 V47 H1075.5 M1071.5 47 H1068.5 V44" fill="none" stroke="#e86060" stroke-width="1.8"/><path d="M1126.5 49 L1134.5 57" stroke="#5a5a5a" stroke-width="3.5" stroke-linecap="round"/><ellipse cx="1122.5" cy="56" rx="11" ry="2" fill="#000" opacity="0.06"/><circle cx="1119.5" cy="42" r="10.5" fill="#ecebe6" stroke="#b8b6ae" stroke-width="1"/><circle cx="1119.5" cy="42" r="8.3" fill="url(#gLens)" stroke="#3a6ab0" stroke-width="0.6"/><path d="M1124.5 42 H1117.5 M1114.5 42 L1118.5 38 V46 Z" fill="#fff" stroke="#fff" stroke-width="2.4" stroke-linejoin="round"/><rect x="1153.5" y="30.5" width="27" height="18" fill="#fff" stroke="#6a8ed0" stroke-width="1"/><path d="M1174 51 L1182 59" stroke="#5a5a5a" stroke-width="3.5" stroke-linecap="round"/><ellipse cx="1170" cy="58" rx="11" ry="2" fill="#000" opacity="0.06"/><circle cx="1167" cy="44" r="10.5" fill="#ecebe6" stroke="#b8b6ae" stroke-width="1"/><circle cx="1167" cy="44" r="8.3" fill="url(#gLens)" stroke="#3a6ab0" stroke-width="0.6"/><path d="M1159 46 Q1167 49 1175 46" stroke="#cfe0f8" stroke-width="1" fill="none"/><path d="M1219.5 49 L1227.5 57" stroke="#5a5a5a" stroke-width="3.5" stroke-linecap="round"/><ellipse cx="1215.5" cy="56" rx="11" ry="2" fill="#000" opacity="0.06"/><circle cx="1212.5" cy="42" r="10.5" fill="#ecebe6" stroke="#b8b6ae" stroke-width="1"/><circle cx="1212.5" cy="42" r="8.3" fill="url(#gLens)" stroke="#3a6ab0" stroke-width="0.6"/><path d="M1202.5 42 H1222.5 M1212.5 32 V52" stroke="#fff" stroke-width="2.2"/><path d="M1201.5 42 l3 -3 v6 Z M1223.5 42 l-3 -3 v6 Z M1212.5 31 l-3 3 h6 Z M1212.5 53 l-3 -3 h6 Z" fill="#fff" stroke="#5a86c8" stroke-width="0.6"/><rect x="7" y="77" width="2" height="2" fill="#8a8a8a"/><rect x="7" y="83" width="2" height="2" fill="#8a8a8a"/><rect x="7" y="89" width="2" height="2" fill="#8a8a8a"/><rect x="7" y="95" width="2" height="2" fill="#8a8a8a"/><rect x="68.0" y="71" width="1" height="1" fill="#555"/><rect x="68.0" y="74" width="1" height="1" fill="#555"/><rect x="68.0" y="77" width="1" height="1" fill="#555"/><rect x="68.0" y="80" width="1" height="1" fill="#555"/><rect x="68.0" y="83" width="1" height="1" fill="#555"/><rect x="68.0" y="86" width="1" height="1" fill="#555"/><rect x="68.0" y="89" width="1" height="1" fill="#555"/><rect x="68.0" y="92" width="1" height="1" fill="#555"/><rect x="68.0" y="95" width="1" height="1" fill="#555"/><rect x="68.0" y="98" width="1" height="1" fill="#555"/><rect x="68.0" y="101" width="1" height="1" fill="#555"/><rect x="68.0" y="104" width="1" height="1" fill="#555"/><rect x="229.0" y="71" width="1" height="1" fill="#555"/><rect x="229.0" y="74" width="1" height="1" fill="#555"/><rect x="229.0" y="77" width="1" height="1" fill="#555"/><rect x="229.0" y="80" width="1" height="1" fill="#555"/><rect x="229.0" y="83" width="1" height="1" fill="#555"/><rect x="229.0" y="86" width="1" height="1" fill="#555"/><rect x="229.0" y="89" width="1" height="1" fill="#555"/><rect x="229.0" y="92" width="1" height="1" fill="#555"/><rect x="229.0" y="95" width="1" height="1" fill="#555"/><rect x="229.0" y="98" width="1" height="1" fill="#555"/><rect x="229.0" y="101" width="1" height="1" fill="#555"/><rect x="229.0" y="104" width="1" height="1" fill="#555"/><rect x="385.0" y="71" width="1" height="1" fill="#555"/><rect x="385.0" y="74" width="1" height="1" fill="#555"/><rect x="385.0" y="77" width="1" height="1" fill="#555"/><rect x="385.0" y="80" width="1" height="1" fill="#555"/><rect x="385.0" y="83" width="1" height="1" fill="#555"/><rect x="385.0" y="86" width="1" height="1" fill="#555"/><rect x="385.0" y="89" width="1" height="1" fill="#555"/><rect x="385.0" y="92" width="1" height="1" fill="#555"/><rect x="385.0" y="95" width="1" height="1" fill="#555"/><rect x="385.0" y="98" width="1" height="1" fill="#555"/><rect x="385.0" y="101" width="1" height="1" fill="#555"/><rect x="385.0" y="104" width="1" height="1" fill="#555"/><rect x="593.0" y="71" width="1" height="1" fill="#555"/><rect x="593.0" y="74" width="1" height="1" fill="#555"/><rect x="593.0" y="77" width="1" height="1" fill="#555"/><rect x="593.0" y="80" width="1" height="1" fill="#555"/><rect x="593.0" y="83" width="1" height="1" fill="#555"/><rect x="593.0" y="86" width="1" height="1" fill="#555"/><rect x="593.0" y="89" width="1" height="1" fill="#555"/><rect x="593.0" y="92" width="1" height="1" fill="#555"/><rect x="593.0" y="95" width="1" height="1" fill="#555"/><rect x="593.0" y="98" width="1" height="1" fill="#555"/><rect x="593.0" y="101" width="1" height="1" fill="#555"/><rect x="593.0" y="104" width="1" height="1" fill="#555"/><rect x="795.0" y="71" width="1" height="1" fill="#555"/><rect x="795.0" y="74" width="1" height="1" fill="#555"/><rect x="795.0" y="77" width="1" height="1" fill="#555"/><rect x="795.0" y="80" width="1" height="1" fill="#555"/><rect x="795.0" y="83" width="1" height="1" fill="#555"/><rect x="795.0" y="86" width="1" height="1" fill="#555"/><rect x="795.0" y="89" width="1" height="1" fill="#555"/><rect x="795.0" y="92" width="1" height="1" fill="#555"/><rect x="795.0" y="95" width="1" height="1" fill="#555"/><rect x="795.0" y="98" width="1" height="1" fill="#555"/><rect x="795.0" y="101" width="1" height="1" fill="#555"/><rect x="795.0" y="104" width="1" height="1" fill="#555"/><rect x="890.0" y="71" width="1" height="1" fill="#555"/><rect x="890.0" y="74" width="1" height="1" fill="#555"/><rect x="890.0" y="77" width="1" height="1" fill="#555"/><rect x="890.0" y="80" width="1" height="1" fill="#555"/><rect x="890.0" y="83" width="1" height="1" fill="#555"/><rect x="890.0" y="86" width="1" height="1" fill="#555"/><rect x="890.0" y="89" width="1" height="1" fill="#555"/><rect x="890.0" y="92" width="1" height="1" fill="#555"/><rect x="890.0" y="95" width="1" height="1" fill="#555"/><rect x="890.0" y="98" width="1" height="1" fill="#555"/><rect x="890.0" y="101" width="1" height="1" fill="#555"/><rect x="890.0" y="104" width="1" height="1" fill="#555"/><rect x="14.5" y="72.5" width="44" height="32" rx="5" fill="url(#gBtn)" stroke="#8a8a8a" stroke-width="1.6"/><path d="M25 88.5 L42 79.5" stroke="#f00" stroke-width="1.1"/><path d="M29 96 L47 87.5" stroke="#111" stroke-width="1.1"/><path d="M31 85.5 L34.5 92.5" stroke="#33f" stroke-width="0.9"/><rect x="497" y="70" width="43" height="36.5" rx="4" fill="#b7b7b7"/><path d="M507.5 99 V84.5 H514.5 V77.5 H529.5 V99" fill="none" stroke="#f00" stroke-width="1.1"/><path d="M511.5 99 V88.5 H518.5 V81.5 H525.5 V99" fill="none" stroke="#111" stroke-width="1.1"/><path d="M557 99.5 V88 H564.5 V80 H573 V99.5" fill="none" stroke="#606060" stroke-width="1.6"/><path d="M565 80 H573" stroke="#5050f0" stroke-width="1.4"/><path d="M565 76 H573" stroke="#f06060" stroke-width="1.4"/><rect x="699" y="70" width="43" height="36.5" rx="4" fill="#b7b7b7"/><path d="M713 99 V89 Q713 81 721 81 H731" fill="none" stroke="#f00" stroke-width="1.1"/><path d="M720.5 99 V88.5 H731" fill="none" stroke="#111" stroke-width="1.1"/><path d="M759 99.5 V80 H778.5" fill="none" stroke="#f06060" stroke-width="1.8"/><path d="M767.5 99.5 V88 H778.5" fill="none" stroke="#555" stroke-width="1.8"/><defs><clipPath id="palclip"><rect x="0" y="108" width="72" height="690"/></clipPath></defs><g clip-path="url(#palclip)"><rect x="7" y="116" width="2" height="2" fill="#8a8a8a"/><rect x="13" y="116" width="2" height="2" fill="#8a8a8a"/><rect x="19" y="116" width="2" height="2" fill="#8a8a8a"/><rect x="25" y="116" width="2" height="2" fill="#8a8a8a"/><rect x="31" y="116" width="2" height="2" fill="#8a8a8a"/><rect x="37" y="116" width="2" height="2" fill="#8a8a8a"/><rect x="43" y="116" width="2" height="2" fill="#8a8a8a"/><rect x="49" y="116" width="2" height="2" fill="#8a8a8a"/><rect x="55" y="116" width="2" height="2" fill="#8a8a8a"/><rect x="61" y="116" width="2" height="2" fill="#8a8a8a"/><rect x="1.5" y="120.5" width="69" height="25" fill="url(#gBtn)" stroke="#888" stroke-width="1"/><path d="M32 133 L40 128.5 V137.5 Z" fill="#111"/><rect x="1.75" y="156.75" width="33.5" height="33.5" fill="url(#gBtn)" stroke="#8c8c8c" stroke-width="1.3"/><rect x="36.75" y="156.75" width="33.5" height="33.5" fill="url(#gBtn)" stroke="#8c8c8c" stroke-width="1.3"/><rect x="1.75" y="191.75" width="33.5" height="33.5" fill="url(#gBtn)" stroke="#8c8c8c" stroke-width="1.3"/><rect x="36.75" y="191.75" width="33.5" height="33.5" fill="url(#gBtn)" stroke="#8c8c8c" stroke-width="1.3"/><rect x="1.75" y="226.75" width="33.5" height="33.5" fill="url(#gBtn)" stroke="#8c8c8c" stroke-width="1.3"/><rect x="36.75" y="226.75" width="33.5" height="33.5" fill="url(#gBtn)" stroke="#8c8c8c" stroke-width="1.3"/><rect x="1.75" y="261.75" width="33.5" height="33.5" fill="url(#gBtn)" stroke="#8c8c8c" stroke-width="1.3"/><rect x="1.5" y="304.5" width="34" height="34" rx="4" fill="#b9b9b9" stroke="#909090" stroke-width="1"/><rect x="36.75" y="304.75" width="33.5" height="33.5" fill="url(#gBtn)" stroke="#8c8c8c" stroke-width="1.3"/><rect x="1.75" y="347.75" width="33.5" height="33.5" fill="url(#gBtn)" stroke="#8c8c8c" stroke-width="1.3"/><rect x="36.75" y="347.75" width="33.5" height="33.5" fill="url(#gBtn)" stroke="#8c8c8c" stroke-width="1.3"/><rect x="1.75" y="382.75" width="33.5" height="33.5" fill="url(#gBtn)" stroke="#8c8c8c" stroke-width="1.3"/><rect x="36.75" y="382.75" width="33.5" height="33.5" fill="url(#gBtn)" stroke="#8c8c8c" stroke-width="1.3"/><rect x="1.75" y="417.75" width="33.5" height="33.5" fill="url(#gBtn)" stroke="#8c8c8c" stroke-width="1.3"/><rect x="1.75" y="460.75" width="33.5" height="33.5" fill="url(#gBtn)" stroke="#8c8c8c" stroke-width="1.3"/><rect x="36.75" y="460.75" width="33.5" height="33.5" fill="url(#gBtn)" stroke="#8c8c8c" stroke-width="1.3"/><rect x="1.75" y="503.75" width="33.5" height="33.5" fill="url(#gBtn)" stroke="#8c8c8c" stroke-width="1.3"/><rect x="36.75" y="503.75" width="33.5" height="33.5" fill="url(#gBtn)" stroke="#8c8c8c" stroke-width="1.3"/><rect x="1.75" y="538.75" width="33.5" height="33.5" fill="url(#gBtn)" stroke="#8c8c8c" stroke-width="1.3"/><rect x="36.75" y="538.75" width="33.5" height="33.5" fill="url(#gBtn)" stroke="#8c8c8c" stroke-width="1.3"/><rect x="1.75" y="573.75" width="33.5" height="33.5" fill="url(#gBtn)" stroke="#8c8c8c" stroke-width="1.3"/><rect x="36.75" y="573.75" width="33.5" height="33.5" fill="url(#gBtn)" stroke="#8c8c8c" stroke-width="1.3"/><rect x="1.75" y="616.75" width="33.5" height="33.5" fill="url(#gBtn)" stroke="#8c8c8c" stroke-width="1.3"/><rect x="36.75" y="616.75" width="33.5" height="33.5" fill="url(#gBtn)" stroke="#8c8c8c" stroke-width="1.3"/><rect x="1.75" y="651.75" width="33.5" height="33.5" fill="url(#gBtn)" stroke="#8c8c8c" stroke-width="1.3"/><rect x="1.75" y="694.75" width="33.5" height="33.5" fill="url(#gBtn)" stroke="#8c8c8c" stroke-width="1.3"/><rect x="1.75" y="737.75" width="33.5" height="33.5" fill="url(#gBtn)" stroke="#8c8c8c" stroke-width="1.3"/><rect x="36.75" y="737.75" width="33.5" height="33.5" fill="url(#gBtn)" stroke="#8c8c8c" stroke-width="1.3"/><rect x="1.75" y="780.75" width="33.5" height="33.5" fill="url(#gBtn)" stroke="#8c8c8c" stroke-width="1.3"/><g transform="translate(1 156)"><path d="M5.6 6.3 V27.2 H13.7 Z" fill="none" stroke="#6e6e6e" stroke-width="1"/><path d="M20.3 6.3 V27.2 H28.9 Z" fill="none" stroke="#f05050" stroke-width="1"/><path d="M9.4 15.8 H18 V13.8 L22 17.2 L18 20.6 V18.6 H9.4 Z" fill="#eef" stroke="#4848ff" stroke-width="0.8"/></g><g transform="translate(36 156)"><path d="M15.2 13.4 L27 5.4 V13.4 Z" fill="none" stroke="#f05050" stroke-width="1"/><path d="M5.7 16.3 V27.6 H13.8 Z" fill="none" stroke="#6e6e6e" stroke-width="1"/><path d="M15.7 25.3 Q21 24 21.5 17 L19.5 17 L23 12.5 L26.5 17 L24.5 17 Q24 26.5 15.7 27.5 Z" fill="#eef" stroke="#4848ff" stroke-width="0.8"/></g><g transform="translate(1 191)"><path d="M5.6 7.3 V27.7 H13.7 Z" fill="none" stroke="#6e6e6e" stroke-width="1"/><path d="M22.2 10.7 V23.5 H27.9 Z" fill="none" stroke="#f05050" stroke-width="1"/><path d="M10.8 17.1 H19.5 V15.1 L23.6 18.5 L19.5 21.9 V19.9 H10.8 Z" fill="#eef" stroke="#4848ff" stroke-width="0.8"/></g><g transform="translate(36 191)"><path d="M4.3 13.5 L24.7 4.5 L10 18.7 Z" fill="none" stroke="#6e6e6e" stroke-width="1"/><path d="M29.4 9.2 L15.2 23.9 L20.4 29.6 Z" fill="none" stroke="#f05050" stroke-width="1"/><path d="M11.4 22.5 L28 5.9" stroke="#4848ff" stroke-width="0.9" stroke-dasharray="2 2"/></g><g transform="translate(1 226)"><path d="M5.2 10 H13 V8 L16.6 11 L13 14 V12 H5.2 Z" fill="#eef" stroke="#4848ff" stroke-width="0.8"/><path d="M26.5 8.5 A4.3 4.3 0 1 0 27 13" fill="none" stroke="#4848ff" stroke-width="2" stroke-dasharray="1.5 0.7"/><path d="M5.6 16.3 V27.6 H13.7 Z" fill="none" stroke="#6e6e6e" stroke-width="1"/><path d="M17 25.3 L28.9 17.2 V25.3 Z" fill="none" stroke="#f05050" stroke-width="1"/></g><g transform="translate(36 226)"><path d="M19.9 4.9 V16.3 H28 Z" fill="none" stroke="#f05050" stroke-width="1"/><path d="M5.7 15.3 V27.2 H13.8 Z" fill="none" stroke="#6e6e6e" stroke-width="1"/><path d="M15.7 25.3 Q23.2 24.5 23.2 18.6" fill="none" stroke="#4848ff" stroke-width="2.2" stroke-dasharray="1.5 0.7"/></g><g transform="translate(1 261)"><path d="M18.9 5.9 H7.5 V16.8 Z" fill="none" stroke="#6e6e6e" stroke-width="1"/><path d="M7.5 16.8 L15.6 21 M18.9 5.9 L27.9 21" stroke="#4848ff" stroke-width="0.6"/><path d="M15.6 21 L21.7 14.9 L27.9 21 Z" fill="none" stroke="#f05050" stroke-width="1"/><path d="M15.6 21 V29.6 M27.9 21 V29.6" stroke="#6e6e6e" stroke-width="1.1"/></g><g transform="translate(1 304)"><path d="M7.5 18 L23.8 10" stroke="#f00" stroke-width="1"/><path d="M12.7 15.4 L16.5 23.3" stroke="#44f" stroke-width="0.7"/><path d="M11.3 25.9 L27.4 17.6" stroke="#111" stroke-width="1"/></g><g transform="translate(36 304)"><path d="M5.7 17.8 L23.7 8.1" stroke="#f00" stroke-width="1"/><path d="M10.3 26.5 L28.5 17.3" stroke="#111" stroke-width="1"/><circle cx="15.7" cy="23.5" r="1.7" fill="#f00"/></g><g transform="translate(1 347)"><path d="M5.2 6.1 L28.4 17.6 M5.2 27.9 L10.8 18.4" stroke="#111" stroke-width="1"/><path d="M10.8 18.4 L15.6 11.8" stroke="#f00" stroke-width="1"/><path d="M13.5 27 L17.5 20 L15.8 19 L20 15.5 L20.5 21 L19 20.3 L15 27.5 Z" fill="#eef" stroke="#4848ff" stroke-width="0.8"/></g><g transform="translate(36 347)"><path d="M6.7 7 L17.1 10.3 M19.9 19.4 L6.7 27.9" stroke="#111" stroke-width="1"/><path d="M17.1 10.3 L27.5 13.7 L19.9 19.4" fill="none" stroke="#f00" stroke-width="1"/><path d="M15.5 6.5 L23 9 L23.5 7.5 L27.5 10 L22.5 12 L22.8 10.5 L15.2 8 Z M17 27 L23.5 22 L22.5 21 L27 20 L25.5 24 L24.5 23.2 L18 28 Z" fill="#eef" stroke="#4848ff" stroke-width="0.8"/></g><g transform="translate(1 382)"><path d="M21.7 6 L13.2 19.3" stroke="#111" stroke-width="1"/><path d="M13.2 19.3 L7.3 27.4" stroke="#f00" stroke-width="1"/><path d="M22.5 14 L20 19.5 L21.3 20.2 L16.5 24.5 L16.8 18.5 L18.2 19.2 L20.5 13 Z" fill="#eef" stroke="#33f" stroke-width="0.9"/><path d="M24.5 20 L27.5 23 M27.5 20 L24.5 23" stroke="#333" stroke-width="0.9"/></g><g transform="translate(36 382)"><path d="M18.5 8.4 H7.1 V20 Q7.1 26.4 13 26.4 H18.5 M18.5 13.6 H11.4 V17.4 H18.5" fill="none" stroke="#222" stroke-width="1.1"/><path d="M18.5 8.4 H27.5 V13.6 H18.5 M18.5 17.4 H27.5 V26.4 H18.5" fill="none" stroke="#f00" stroke-width="1.1"/><path d="M12.8 20.5 H21 V19 L24.7 21.7 L21 24.4 V23 H12.8 Z" fill="#eef" stroke="#4848ff" stroke-width="0.8"/></g><g transform="translate(1 417)"><path d="M4.3 17.5 L29.4 3.3 M14.2 30.3 L31.8 19.9 M17.5 3.8 L31.3 26" stroke="#f4a0a0" stroke-width="0.7"/><circle cx="14" cy="20" r="5" fill="none" stroke="#f4b0b0" stroke-width="0.7"/><rect x="10.2" y="11.3" width="13.6" height="11.2" fill="none" stroke="#6a6aff" stroke-width="1"/><path d="M10.2 13 Q19.4 12.5 19.4 22.5" fill="none" stroke="#666" stroke-width="1"/></g><g transform="translate(1 460)"><path d="M6.6 8.5 H15.7" stroke="#111" stroke-width="1"/><path d="M15.7 8.5 L25.5 18.4" stroke="#f00" stroke-width="1"/><path d="M25.5 18.4 V26" stroke="#111" stroke-width="1"/></g><g transform="translate(36 460)"><path d="M6.7 8.5 H15.2" stroke="#111" stroke-width="1"/><path d="M15.2 8.5 A10.4 9.9 0 0 1 25.6 18.4" fill="none" stroke="#f00" stroke-width="1"/><path d="M25.6 18.4 V26" stroke="#111" stroke-width="1"/><circle cx="15.6" cy="18.4" r="0.9" fill="#00f"/></g><g transform="translate(1 503)"><path d="M4.2 25.2 L19.4 4.3" stroke="#111" stroke-width="1"/><g opacity="1"><path d="M8 13 L20 15.5 L19.5 18 L8.5 15.5 Z M14 4.5 L17 4 L19.5 16 L16.5 16 Z" fill="#f2f2f2" stroke="#888" stroke-width="0.6"/><ellipse cx="26.5" cy="16.6" rx="3.7" ry="2.5" fill="none" stroke="#d02020" stroke-width="1.6"/><ellipse cx="19.4" cy="25.2" rx="2.4" ry="4" fill="none" stroke="#d02020" stroke-width="1.6"/><path d="M19.5 17 L22.5 16.5 M19.5 18 L19.5 21" stroke="#d02020" stroke-width="1.4"/></g><circle cx="12.7" cy="12.4" r="1.8" fill="#f00"/></g><g transform="translate(36 503)"><path d="M4.3 25.2 L19.5 4.3" stroke="#555" stroke-width="0.7"/><g opacity="0.5"><path d="M8 13 L20 15.5 L19.5 18 L8.5 15.5 Z M14 4.5 L17 4 L19.5 16 L16.5 16 Z" fill="#f2f2f2" stroke="#888" stroke-width="0.6"/><ellipse cx="26.5" cy="16.6" rx="3.7" ry="2.5" fill="none" stroke="#d02020" stroke-width="1.6"/><ellipse cx="19.4" cy="25.2" rx="2.4" ry="4" fill="none" stroke="#d02020" stroke-width="1.6"/><path d="M19.5 17 L22.5 16.5 M19.5 18 L19.5 21" stroke="#d02020" stroke-width="1.4"/></g><circle cx="14.2" cy="11" r="1.6" fill="#f08080"/><circle cx="8.5" cy="19" r="1.6" fill="#f08080"/></g><g transform="translate(1 538)"><path d="M11.3 6.3 V26.7 M22.5 6.3 V26.7" stroke="#111" stroke-width="1.2"/><path d="M4.7 16.5 H11.3 M22.5 16.5 H29.3" stroke="#111" stroke-width="1.2"/><path d="M11.3 16.5 H22.5" stroke="#999" stroke-width="0.6"/><circle cx="11.3" cy="16.5" r="1.9" fill="#f00"/><circle cx="22.5" cy="16.5" r="1.9" fill="#f00"/></g><g transform="translate(36 538)"><path d="M8.4 6.3 V26.7 M19.5 6.3 V26.7 M19.5 13.6 H26.6 M19.5 20.3 H26.6" stroke="#111" stroke-width="1.2"/><path d="M8.4 13.6 H19.5 M8.4 20.3 H19.5" stroke="#aaa" stroke-width="0.6" stroke-dasharray="1 1"/><circle cx="19.5" cy="13.6" r="1.9" fill="#f00"/><circle cx="19.5" cy="20.3" r="1.9" fill="#f00"/></g><g transform="translate(1 573)"><path d="M11.3 6.5 V26.4 M22.5 6.5 V26.4 M11.3 16.4 H22.5" stroke="#111" stroke-width="1.2"/><path d="M5 15 L8 18 M8 15 L5 18 M26 15 L29 18 M29 15 L26 18" stroke="#66f" stroke-width="0.8"/><circle cx="11.3" cy="16.4" r="1.9" fill="#f00"/><circle cx="22.5" cy="16.4" r="1.9" fill="#f00"/></g><g transform="translate(36 573)"><path d="M5.7 27.8 L13.3 21.2 M19.9 14.1 L28 6" stroke="#111" stroke-width="1"/><circle cx="16.6" cy="17.4" r="1.9" fill="#f00"/></g><g transform="translate(1 616)"><rect x="5.6" y="10.4" width="23.3" height="14.2" fill="#fff" stroke="#222" stroke-width="1.1"/><text x="7" y="23.3" font-family="Liberation Serif" font-size="15" fill="#222">A</text><path d="M20.5 12.5 V23.5" stroke="#222" stroke-width="1"/></g><g transform="translate(36 616)"><rect x="4.3" y="10.4" width="25.3" height="15.2" fill="#fff" stroke="#222" stroke-width="1.1"/><path d="M17.6 10.4 V25.6" stroke="#222" stroke-width="1.1"/><circle cx="10.4" cy="17.8" r="2.6" fill="none" stroke="#222" stroke-width="1.2"/><path d="M6.5 17.8 H14.3 M10.4 13.9 V21.7" stroke="#222" stroke-width="1.1"/><text x="19.5" y="23.8" font-size="12" fill="#222">.1</text><path d="M13.3 16 L25.6 5.2" stroke="#a06010" stroke-width="3.2"/><path d="M13.3 16 L25.6 5.2" stroke="#f2b040" stroke-width="2"/><path d="M24 6.6 L25.8 5" stroke="#e03030" stroke-width="3"/></g><g transform="translate(1 651)"><defs><pattern id="hatch" width="3" height="3" patternUnits="userSpaceOnUse" patternTransform="rotate(45)"><rect width="3" height="3" fill="#eee"/><path d="M0 0 V3" stroke="#777" stroke-width="1"/></pattern></defs><path d="M5.5 24.8 L12.6 13.6 H26.3 L26.8 27.8 H6.1 Z" fill="url(#hatch)" stroke="#333" stroke-width="1"/><circle cx="18.5" cy="21.3" r="3" fill="#fff" stroke="#222" stroke-width="1"/><path d="M16.8 16.5 L27.4 6.5" stroke="#a06010" stroke-width="3.2"/><path d="M16.8 16.5 L27.4 6.5" stroke="#f2b040" stroke-width="2"/><path d="M26 7.8 L27.6 6.3" stroke="#e03030" stroke-width="3"/></g><g transform="translate(1 694)"><path d="M21 10 L26.5 25" stroke="#b03030" stroke-width="7.5" stroke-linecap="round"/><path d="M21 10 L26.5 25" stroke="#e06060" stroke-width="5" stroke-linecap="round"/><path d="M21 8 Q17 3 13 8" fill="none" stroke="#888" stroke-width="1"/><circle cx="8.7" cy="12.9" r="3" fill="#f4e040"/><path d="M4 12.9 H13.4 M8.7 8.2 V17.6 M5.5 9.7 L11.9 16.1 M11.9 9.7 L5.5 16.1" stroke="#e8c020" stroke-width="0.8"/></g><g transform="translate(1 737)"><rect x="5.5" y="18.9" width="8.8" height="6.5" fill="#a8a8a8" stroke="#888" stroke-width="0.6"/><rect x="20.8" y="8" width="7.6" height="6.5" fill="#a8a8a8" stroke="#888" stroke-width="0.6"/><rect x="11" y="11.3" width="12" height="10.9" fill="#f4f0d8" stroke="#999" stroke-width="0.7"/></g><g transform="translate(36 737)"><rect x="5.5" y="18.9" width="8.8" height="6.5" fill="#a8a8a8" stroke="#888" stroke-width="0.6"/><rect x="20.8" y="8" width="7.6" height="6.5" fill="#a8a8a8" stroke="#888" stroke-width="0.6"/><rect x="11" y="11.3" width="12" height="10.9" fill="#f4f0d8" stroke="#999" stroke-width="0.7"/></g><g transform="translate(1 780)"><rect x="7.7" y="5.5" width="16" height="6" rx="2" fill="#f2d060" stroke="#b09030" stroke-width="0.7"/><path d="M23.7 8.5 H26 V14 H16 V18" fill="none" stroke="#999" stroke-width="1"/></g></g><circle cx="102" cy="118.5" r="5.6" fill="#f4f4f8" stroke="#2a4a9a" stroke-width="1.8"/><path d="M99 116 L104 121 M98 119 H105" stroke="#d08080" stroke-width="0.6"/><path d="M102 118 L107.5 123.5" stroke="#e8a020" stroke-width="1.8"/><circle cx="108" cy="124" r="1" fill="#e06060"/><circle cx="1164" cy="118" r="7" fill="#6c6c6c"/><path d="M1160.8 114.8 L1167.2 121.2 M1167.2 114.8 L1160.8 121.2" stroke="#fff" stroke-width="1.8"/><circle cx="1182" cy="118" r="7" fill="#6c6c6c"/><rect x="1180.5" y="114.5" width="5" height="4" fill="none" stroke="#fff" stroke-width="1"/><rect x="1178.5" y="117" width="5" height="4" fill="#6c6c6c" stroke="#fff" stroke-width="1"/><g transform="translate(1184.5 142.5) scale(1.05)"><path d="M-7.5 0.5 Q-4 -6 0.5 -5.5 Q5 -5.5 7.5 0 Q4 5.5 0 5.3 Q-4.5 5 -7.5 0.5 Z" fill="#111"/><path d="M-4.5 0.5 Q-2 -3.5 0.5 -3.2 Q3.5 -3 4.5 0.3 Q2.5 3.4 0 3.3 Q-3 3 -4.5 0.5 Z" fill="#fff"/><circle cx="0" cy="0.3" r="2.2" fill="#111"/><circle cx="-0.6" cy="-0.5" r="0.6" fill="#fff"/></g><g transform="translate(1244.5 142.5) scale(1.05)"><path d="M-7.5 0.5 Q-4 -6 0.5 -5.5 Q5 -5.5 7.5 0 Q4 5.5 0 5.3 Q-4.5 5 -7.5 0.5 Z" fill="#9a9a9a"/><path d="M-4.5 0.5 Q-2 -3.5 0.5 -3.2 Q3.5 -3 4.5 0.3 Q2.5 3.4 0 3.3 Q-3 3 -4.5 0.5 Z" fill="#fff"/><circle cx="0" cy="0.3" r="2.2" fill="#9a9a9a"/><circle cx="-0.6" cy="-0.5" r="0.6" fill="#fff"/></g><path d="M1303 137 H1306 V141 H1310 V144 H1306 V148 H1303 V144 H1299 V141 H1303 Z" fill="#f00" stroke="#900" stroke-width="0.5"/><rect x="1359" y="141" width="12" height="4" fill="#f00" stroke="#900" stroke-width="0.5"/><path d="M1419 149.5 L1431.5 136" stroke="#8a6020" stroke-width="3.4" stroke-linecap="round"/><path d="M1419 149.5 L1431.5 136" stroke="#f0b040" stroke-width="2.2"/><path d="M1429.5 138 L1431.5 136" stroke="#e02020" stroke-width="3" stroke-linecap="round"/><path d="M1419 149.5 l1.5 -1.5" stroke="#333" stroke-width="1.5"/><g transform="translate(1422.5 166.5) scale(1.0)"><path d="M-7.5 0.5 Q-4 -6 0.5 -5.5 Q5 -5.5 7.5 0 Q4 5.5 0 5.3 Q-4.5 5 -7.5 0.5 Z" fill="#111"/><path d="M-4.5 0.5 Q-2 -3.5 0.5 -3.2 Q3.5 -3 4.5 0.3 Q2.5 3.4 0 3.3 Q-3 3 -4.5 0.5 Z" fill="#fff"/><circle cx="0" cy="0.3" r="2.2" fill="#111"/><circle cx="-0.6" cy="-0.5" r="0.6" fill="#fff"/></g><g transform="translate(1422.5 186.5) scale(1.0)"><path d="M-7.5 0.5 Q-4 -6 0.5 -5.5 Q5 -5.5 7.5 0 Q4 5.5 0 5.3 Q-4.5 5 -7.5 0.5 Z" fill="#111"/><path d="M-4.5 0.5 Q-2 -3.5 0.5 -3.2 Q3.5 -3 4.5 0.3 Q2.5 3.4 0 3.3 Q-3 3 -4.5 0.5 Z" fill="#fff"/><circle cx="0" cy="0.3" r="2.2" fill="#111"/><circle cx="-0.6" cy="-0.5" r="0.6" fill="#fff"/></g><path d="M1441.5 166 V163.5 A3.5 3.5 0 0 1 1448.5 163.5 V166" fill="none" stroke="#b4b4b4" stroke-width="1.4"/><rect x="1440" y="166" width="10" height="7.5" fill="#b4b4b4"/><path d="M1441.5 186 V183.5 A3.5 3.5 0 0 1 1448.5 183.5 V186" fill="none" stroke="#b4b4b4" stroke-width="1.4"/><rect x="1440" y="186" width="10" height="7.5" fill="#b4b4b4"/><path d="M1395 193.5 L1407 181" stroke="#8a6020" stroke-width="3.4" stroke-linecap="round"/><path d="M1395 193.5 L1407 181" stroke="#f0b040" stroke-width="2.2"/><path d="M1405 183 L1407 181" stroke="#e02020" stroke-width="3" stroke-linecap="round"/><path d="M1395 193.5 l1.5 -1.5" stroke="#333" stroke-width="1.5"/><rect x="1462" y="116" width="2" height="2" fill="#8a8a8a"/><rect x="1468" y="116" width="2" height="2" fill="#8a8a8a"/><rect x="1474" y="116" width="2" height="2" fill="#8a8a8a"/><rect x="1480" y="116" width="2" height="2" fill="#8a8a8a"/><rect x="1486" y="116" width="2" height="2" fill="#8a8a8a"/><rect x="1458" y="261" width="1" height="1" fill="#666"/><rect x="1461" y="261" width="1" height="1" fill="#666"/><rect x="1464" y="261" width="1" height="1" fill="#666"/><rect x="1467" y="261" width="1" height="1" fill="#666"/><rect x="1470" y="261" width="1" height="1" fill="#666"/><rect x="1473" y="261" width="1" height="1" fill="#666"/><rect x="1476" y="261" width="1" height="1" fill="#666"/><rect x="1479" y="261" width="1" height="1" fill="#666"/><rect x="1482" y="261" width="1" height="1" fill="#666"/><rect x="1485" y="261" width="1" height="1" fill="#666"/><rect x="1488" y="261" width="1" height="1" fill="#666"/><rect x="1491" y="261" width="1" height="1" fill="#666"/><rect x="1494" y="261" width="1" height="1" fill="#666"/><rect x="1497" y="261" width="1" height="1" fill="#666"/><rect x="1458" y="409" width="1" height="1" fill="#666"/><rect x="1461" y="409" width="1" height="1" fill="#666"/><rect x="1464" y="409" width="1" height="1" fill="#666"/><rect x="1467" y="409" width="1" height="1" fill="#666"/><rect x="1470" y="409" width="1" height="1" fill="#666"/><rect x="1473" y="409" width="1" height="1" fill="#666"/><rect x="1476" y="409" width="1" height="1" fill="#666"/><rect x="1479" y="409" width="1" height="1" fill="#666"/><rect x="1482" y="409" width="1" height="1" fill="#666"/><rect x="1485" y="409" width="1" height="1" fill="#666"/><rect x="1488" y="409" width="1" height="1" fill="#666"/><rect x="1491" y="409" width="1" height="1" fill="#666"/><rect x="1494" y="409" width="1" height="1" fill="#666"/><rect x="1497" y="409" width="1" height="1" fill="#666"/><rect x="1456.5" y="120" width="43.5" height="43" rx="5" fill="#b9b9b9"/><rect x="1456.5" y="417" width="43.5" height="43" rx="5" fill="#b9b9b9"/><g transform="translate(1463 127)"><rect x="0.5" y="0.5" width="27" height="27" fill="#fff" stroke="#555" stroke-width="1"/><rect x="0" y="0" width="28" height="5" fill="#000"/><rect x="1.3" y="1" width="3" height="3" fill="#fff"/><path d="M7 12 L14 8 V20 L7 24 Z" fill="#999" stroke="#555" stroke-width="0.7"/><path d="M10 10.5 L21 6 V18 L10 22.5 Z" fill="#f6f6f6" stroke="#666" stroke-width="0.7"/><path d="M13 19 L17 10 L18 17 Z" fill="none" stroke="#e03030" stroke-width="0.8"/></g><g transform="translate(1463 174)"><rect x="0.5" y="0.5" width="27" height="27" fill="#fff" stroke="#555" stroke-width="1"/><rect x="0" y="0" width="28" height="5" fill="#000"/><rect x="1.3" y="1" width="3" height="3" fill="#fff"/><rect x="7" y="10" width="11" height="8" fill="#f4eccc" stroke="#888" stroke-width="0.7"/><circle cx="18" cy="18" r="4.5" fill="#f4eccc" fill-opacity="0.7" stroke="#998860" stroke-width="0.7"/></g><g transform="translate(1463 220)"><rect x="0.5" y="0.5" width="27" height="27" fill="#fff" stroke="#555" stroke-width="1"/><rect x="0" y="0" width="28" height="5" fill="#000"/><rect x="1.3" y="1" width="3" height="3" fill="#fff"/><rect x="5" y="10" width="18" height="12" rx="2" fill="#f4f4f8" stroke="#a8c0e0" stroke-width="1"/></g><g transform="translate(1463 276)"><rect x="0.5" y="0.5" width="27" height="27" fill="#fff" stroke="#555" stroke-width="1"/><rect x="0" y="0" width="28" height="5" fill="#000"/><rect x="1.3" y="1" width="3" height="3" fill="#fff"/><rect x="4" y="9" width="4" height="3.5" rx="1" fill="#000"/><rect x="10.5" y="9" width="14" height="3.5" rx="0.8" fill="#fff" stroke="#555" stroke-width="0.8"/><rect x="4" y="15" width="4" height="3.5" rx="1" fill="#000"/><rect x="10.5" y="15" width="14" height="3.5" rx="0.8" fill="#fff" stroke="#555" stroke-width="0.8"/><rect x="4" y="21" width="4" height="3.5" rx="1" fill="#000"/><rect x="10.5" y="21" width="14" height="3.5" rx="0.8" fill="#fff" stroke="#555" stroke-width="0.8"/></g><g transform="translate(1463 322)"><rect x="0.5" y="0.5" width="27" height="27" fill="#fff" stroke="#555" stroke-width="1"/><rect x="0" y="0" width="28" height="5" fill="#000"/><rect x="1.3" y="1" width="3" height="3" fill="#fff"/><path d="M7 10 Q14 8 21 10 L15.5 17 V24 L13.5 22 V17 Z" fill="#aaa" stroke="#444" stroke-width="0.8"/></g><g transform="translate(1463 368)"><rect x="0.5" y="0.5" width="27" height="27" fill="#fff" stroke="#555" stroke-width="1"/><rect x="0" y="0" width="28" height="5" fill="#000"/><rect x="1.3" y="1" width="3" height="3" fill="#fff"/><path d="M5 9 L5 25 L11 19 V14 Z" fill="#f0f0f0" stroke="#333" stroke-width="0.8"/><rect x="11" y="13.5" width="12" height="7" rx="2" fill="#999"/><path d="M4 17 H25" stroke="#f08080" stroke-width="0.6" stroke-dasharray="1 1"/></g><g transform="translate(1463 424)"><rect x="0.5" y="0.5" width="27" height="27" fill="#fff" stroke="#555" stroke-width="1"/><rect x="0" y="0" width="28" height="5" fill="#000"/><rect x="1.3" y="1" width="3" height="3" fill="#fff"/><path d="M3 10 H12" stroke="#bbb" stroke-width="0.8"/><path d="M3 13 H16" stroke="#bbb" stroke-width="0.8"/><path d="M3 16 H12" stroke="#bbb" stroke-width="0.8"/><path d="M3 19 H16" stroke="#bbb" stroke-width="0.8"/><path d="M0 22.5 H28" stroke="#555" stroke-width="0.8"/><path d="M3 25 H8 M13 25 H25" stroke="#999" stroke-width="0.8"/></g><g transform="translate(1463 471)"><rect x="0.5" y="0.5" width="27" height="27" fill="#fff" stroke="#555" stroke-width="1"/><rect x="0" y="0" width="28" height="5" fill="#000"/><rect x="1.3" y="1" width="3" height="3" fill="#fff"/><rect x="9" y="9" width="11" height="14" rx="1" fill="#c08a30"/><rect x="10.5" y="11" width="8" height="10.5" fill="#eee"/><rect x="12" y="7.5" width="5" height="3" fill="#999"/></g><g transform="translate(1133 780)"><rect x="0.5" y="0.5" width="13" height="9" fill="#f0f0f0" stroke="#6a6a6a" stroke-width="1"/><rect x="0" y="0" width="14" height="3" fill="#000"/><rect x="10" y="1" width="1" height="1" fill="#777"/></g></svg></body></html>
